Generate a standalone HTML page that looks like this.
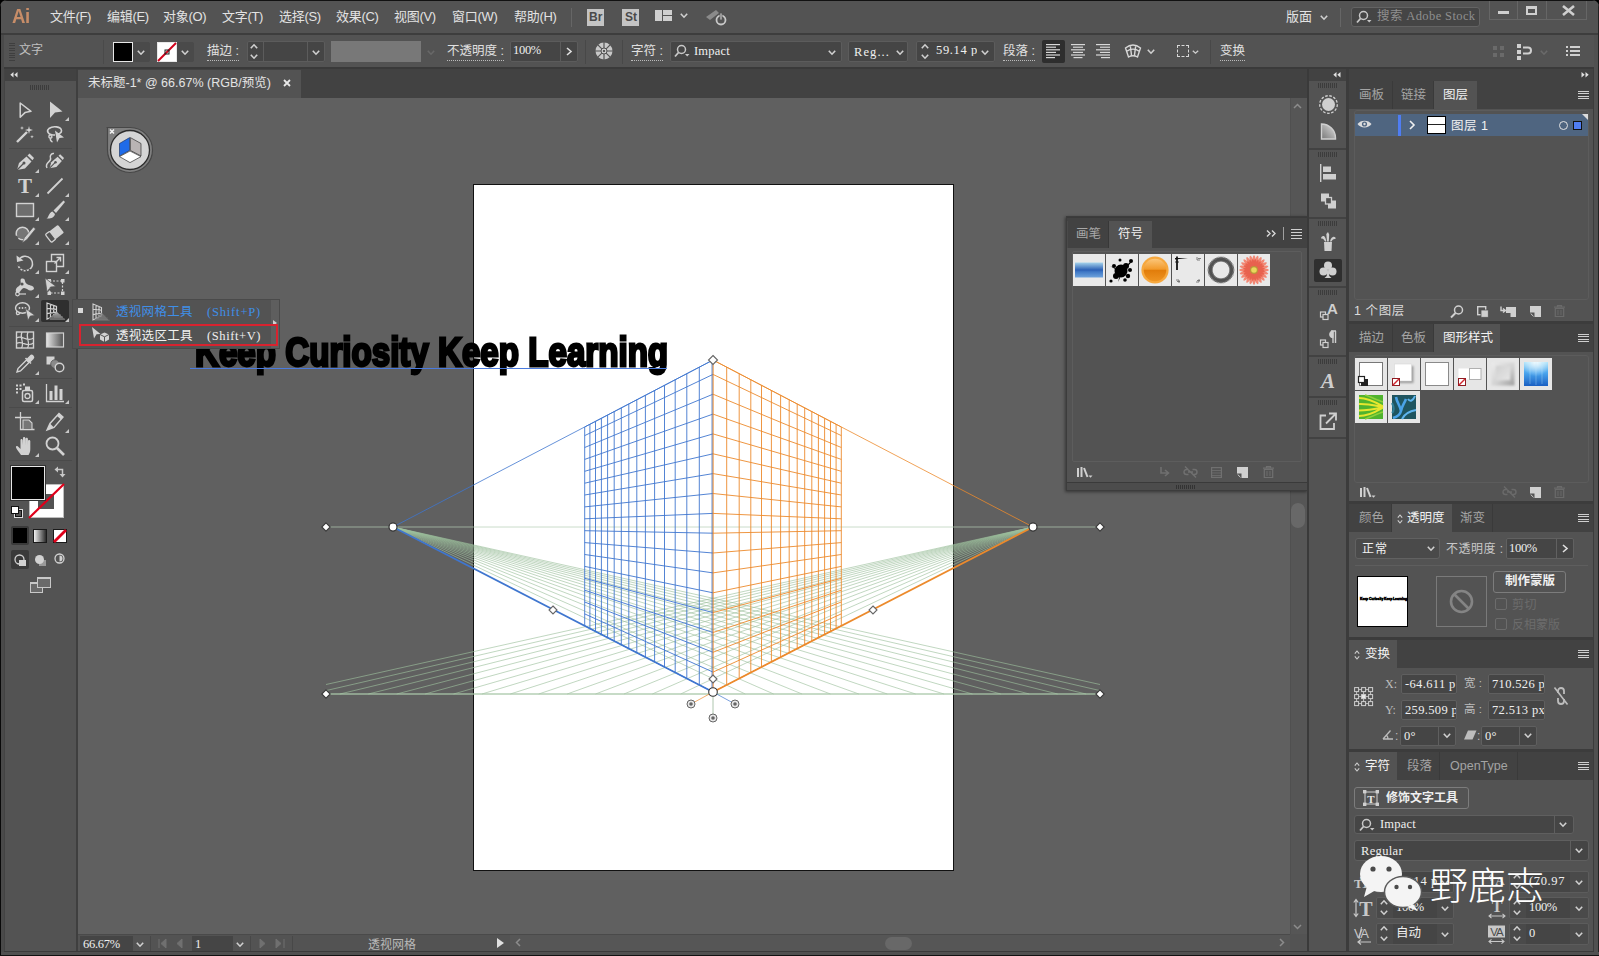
<!DOCTYPE html><html lang="zh"><head><meta charset="utf-8"><title>Illustrator</title><style>
*{box-sizing:border-box;margin:0;padding:0}
html,body{width:1599px;height:956px;overflow:hidden;background:#000}
body{font-family:"Liberation Sans","Noto Sans CJK SC",sans-serif;font-size:12px;color:#d6d6d6;position:relative}
.a{position:absolute}
.mono{font-family:"Liberation Mono","Noto Sans CJK SC",monospace}
.num{font-family:"Liberation Serif","Noto Sans CJK SC",serif}
#win{position:absolute;left:0;top:0;width:1599px;height:956px;background:#535353;border-radius:7px 7px 0 0;overflow:hidden}
.t{position:absolute;white-space:nowrap;line-height:1}
.fld{position:absolute;background:#454545;border:1px solid #5f5f5f;border-radius:2px}
.dk{background:#424242}
svg{position:absolute;overflow:visible}
</style></head><body><div id="win">
<div class="a" style="left:0px;top:0px;width:1599px;height:34px;background:#535353;"></div>
<div class="a" style="left:0px;top:33px;width:1599px;height:2px;background:#3d3d3d;"></div>
<div class="t " style="left:12px;top:6px;font-size:20px;color:#c78d68;font-weight:bold;letter-spacing:-0.5px;transform:scaleX(0.93);transform-origin:0 0">Ai</div>
<div class="t " style="left:50px;top:10px;font-size:13px;color:#e2e2e2;letter-spacing:-0.3px">文件(F)</div>
<div class="t " style="left:107px;top:10px;font-size:13px;color:#e2e2e2;letter-spacing:-0.3px">编辑(E)</div>
<div class="t " style="left:163px;top:10px;font-size:13px;color:#e2e2e2;letter-spacing:-0.3px">对象(O)</div>
<div class="t " style="left:222px;top:10px;font-size:13px;color:#e2e2e2;letter-spacing:-0.3px">文字(T)</div>
<div class="t " style="left:279px;top:10px;font-size:13px;color:#e2e2e2;letter-spacing:-0.3px">选择(S)</div>
<div class="t " style="left:336px;top:10px;font-size:13px;color:#e2e2e2;letter-spacing:-0.3px">效果(C)</div>
<div class="t " style="left:394px;top:10px;font-size:13px;color:#e2e2e2;letter-spacing:-0.3px">视图(V)</div>
<div class="t " style="left:452px;top:10px;font-size:13px;color:#e2e2e2;letter-spacing:-0.3px">窗口(W)</div>
<div class="t " style="left:514px;top:10px;font-size:13px;color:#e2e2e2;letter-spacing:-0.3px">帮助(H)</div>
<div class="a" style="left:571px;top:8px;width:1px;height:19px;background:#666;"></div>
<div class="a" style="left:587px;top:9px;width:17px;height:17px;background:#c4c4c4;"></div>
<div class="t " style="left:589px;top:11px;font-size:12px;color:#4a4a4a;font-weight:bold">Br</div>
<div class="a" style="left:622px;top:9px;width:17px;height:17px;background:#c4c4c4;"></div>
<div class="t " style="left:625px;top:11px;font-size:12px;color:#4a4a4a;font-weight:bold">St</div>
<div class="a" style="left:655px;top:10px;width:7px;height:11px;background:#cfcfcf;"></div>
<div class="a" style="left:663px;top:10px;width:9px;height:5px;background:#cfcfcf;"></div>
<div class="a" style="left:663px;top:16px;width:9px;height:5px;background:#cfcfcf;"></div>
<svg class="a" style="left:680px;top:13px" width="8" height="5" viewBox="0 0 8 5"><path d="M0.8 0.8 L4.0 4.2 L7.2 0.8" fill="none" stroke="#d0d0d0" stroke-width="1.6"/></svg>
<svg class="a" style="left:704px;top:8px;" width="24" height="20" viewBox="0 0 24 20"><path d="M2 9 L12 2 L15 5 L6 12 Z" fill="#8a8a8a"/><circle cx="17" cy="12" r="4.5" fill="none" stroke="#c8c8c8" stroke-width="1.8"/><rect x="16" y="5" width="2" height="7" fill="#c8c8c8" stroke="#535353" stroke-width="0.8"/></svg>
<div class="t " style="left:1286px;top:10px;font-size:13px;color:#e2e2e2;">版面</div>
<svg class="a" style="left:1320px;top:15px" width="8" height="5" viewBox="0 0 8 5"><path d="M0.8 0.8 L4.0 4.2 L7.2 0.8" fill="none" stroke="#d0d0d0" stroke-width="1.6"/></svg>
<div class="a" style="left:1340px;top:8px;width:1px;height:19px;background:#666;"></div>
<div class="a" style="left:1351px;top:7px;width:129px;height:20px;background:#454545;border:1px solid #636363;border-radius:3px"></div>
<svg class="a" style="left:1356px;top:10px;" width="18" height="14" viewBox="0 0 18 14"><circle cx="7.5" cy="5.5" r="4" fill="none" stroke="#c8c8c8" stroke-width="1.5"/><path d="M4.5 8.5 L1 12.5" stroke="#c8c8c8" stroke-width="1.8"/><path d="M11 10 L15.5 10 L13.2 12.5 Z" fill="#c8c8c8"/></svg>
<div class="t num" style="left:1377px;top:9.5px;font-size:12.5px;color:#8f8f8f;letter-spacing:0.39px;">搜索 Adobe Stock</div>
<div class="a" style="left:1489px;top:1px;width:98px;height:19px;border:1px solid #666;border-top:none"></div>
<div class="a" style="left:1517px;top:1px;width:1px;height:19px;background:#666;"></div>
<div class="a" style="left:1546px;top:1px;width:1px;height:19px;background:#666;"></div>
<div class="a" style="left:1498px;top:11px;width:11px;height:3px;background:#cfcfcf;"></div>
<div class="a" style="left:1526px;top:6px;width:11px;height:9px;border:2px solid #cfcfcf;border-top-width:3px"></div>
<svg class="a" style="left:1562px;top:5px;" width="13" height="11" viewBox="0 0 13 11"><path d="M1 1 L12 10 M12 1 L1 10" stroke="#cfcfcf" stroke-width="2.6"/></svg>
<div class="a" style="left:0px;top:35px;width:1599px;height:32px;background:#535353;"></div>
<div class="a" style="left:0px;top:67px;width:1599px;height:2px;background:#3a3a3a;"></div>
<div class="a" style="left:9px;top:43.0px;width:6px;height:1px;background:#3f3f3f;"></div>
<div class="a" style="left:9px;top:45.4px;width:6px;height:1px;background:#3f3f3f;"></div>
<div class="a" style="left:9px;top:47.8px;width:6px;height:1px;background:#3f3f3f;"></div>
<div class="a" style="left:9px;top:50.2px;width:6px;height:1px;background:#3f3f3f;"></div>
<div class="a" style="left:9px;top:52.6px;width:6px;height:1px;background:#3f3f3f;"></div>
<div class="a" style="left:9px;top:55.0px;width:6px;height:1px;background:#3f3f3f;"></div>
<div class="a" style="left:9px;top:57.4px;width:6px;height:1px;background:#3f3f3f;"></div>
<div class="a" style="left:9px;top:59.8px;width:6px;height:1px;background:#3f3f3f;"></div>
<div class="t " style="left:19px;top:44px;font-size:12px;color:#c0c0c0;">文字</div>
<div class="a" style="left:103px;top:40px;width:1px;height:24px;background:#4a4a4a;"></div>
<div class="a" style="left:113px;top:42px;width:20px;height:20px;background:#000;border:1px solid #e8e8e8"></div>
<div class="a" style="left:133px;top:42px;width:17px;height:20px;background:#4a4a4a;border-radius:0 2px 2px 0"></div>
<svg class="a" style="left:137px;top:50px" width="8" height="5" viewBox="0 0 8 5"><path d="M0.8 0.8 L4.0 4.2 L7.2 0.8" fill="none" stroke="#d0d0d0" stroke-width="1.6"/></svg>
<div class="a" style="left:157px;top:42px;width:20px;height:20px;background:#fff;border:1px solid #e8e8e8"></div>
<svg class="a" style="left:157px;top:42px;" width="20" height="20" viewBox="0 0 20 20"><path d="M1 19 L19 1" stroke="#d0021b" stroke-width="2"/><rect x="8" y="8" width="4" height="4" fill="none" stroke="#222" stroke-width="1"/></svg>
<div class="a" style="left:177px;top:42px;width:17px;height:20px;background:#4a4a4a;border-radius:0 2px 2px 0"></div>
<svg class="a" style="left:181px;top:50px" width="8" height="5" viewBox="0 0 8 5"><path d="M0.8 0.8 L4.0 4.2 L7.2 0.8" fill="none" stroke="#d0d0d0" stroke-width="1.6"/></svg>
<div class="t " style="left:207px;top:45px;font-size:12.5px;color:#e0e0e0;border-bottom:1px dotted #bbb;padding-bottom:2px">描边 :</div>
<div class="a" style="left:247px;top:41px;width:78px;height:21px;background:#454545;border:1px solid #5c5c5c;border-radius:2px"></div>
<div class="a" style="left:263px;top:42px;width:1px;height:19px;background:#5c5c5c;"></div>
<div class="a" style="left:307px;top:42px;width:1px;height:19px;background:#5c5c5c;"></div>
<svg class="a" style="left:250px;top:54px;" width="8" height="5" viewBox="0 0 8 5"><path d="M0.8 0.8 L4 4.2 L7.2 0.8" fill="none" stroke="#d0d0d0" stroke-width="1.6"/></svg>
<svg class="a" style="left:250px;top:44px;" width="8" height="5" viewBox="0 0 8 5"><path d="M0.8 4.2 L4 0.8 L7.2 4.2" fill="none" stroke="#d0d0d0" stroke-width="1.6"/></svg>
<svg class="a" style="left:312px;top:50px" width="8" height="5" viewBox="0 0 8 5"><path d="M0.8 0.8 L4.0 4.2 L7.2 0.8" fill="none" stroke="#d0d0d0" stroke-width="1.6"/></svg>
<div class="a" style="left:331px;top:41px;width:90px;height:21px;background:#787878;"></div>
<svg class="a" style="left:427px;top:50px" width="8" height="5" viewBox="0 0 8 5"><path d="M0.8 0.8 L4.0 4.2 L7.2 0.8" fill="none" stroke="#686868" stroke-width="1.6"/></svg>
<div class="t " style="left:447px;top:45px;font-size:12.5px;color:#e0e0e0;border-bottom:1px dotted #bbb;padding-bottom:2px">不透明度 :</div>
<div class="a" style="left:510px;top:41px;width:68px;height:21px;background:#454545;border:1px solid #5c5c5c;border-radius:2px"></div>
<div class="a" style="left:560px;top:42px;width:1px;height:19px;background:#5c5c5c;"></div>
<div class="t num" style="left:513px;top:43.5px;font-size:12.5px;color:#f0f0f0;letter-spacing:-0.30px;">100%</div>
<svg class="a" style="left:566px;top:47px;" width="6" height="9" viewBox="0 0 6 9"><path d="M1 1 L5 4.5 L1 8" fill="none" stroke="#e0e0e0" stroke-width="1.6"/></svg>
<div class="a" style="left:585px;top:40px;width:1px;height:24px;background:#484848;"></div>
<svg class="a" style="left:595px;top:42px;" width="18" height="18" viewBox="0 0 18 18"><circle cx="9" cy="9" r="8.5" fill="#c8c8c8"/><g stroke="#535353" stroke-width="1.2"><path d="M9 0 V18 M0 9 H18 M2.6 2.6 L15.4 15.4 M15.4 2.6 L2.6 15.4"/></g><circle cx="9" cy="9" r="3" fill="#c8c8c8" stroke="#535353"/><circle cx="9" cy="9" r="1" fill="#333"/></svg>
<div class="a" style="left:622px;top:40px;width:1px;height:24px;background:#484848;"></div>
<div class="t " style="left:631px;top:45px;font-size:12.5px;color:#e0e0e0;border-bottom:1px dotted #bbb;padding-bottom:2px">字符 :</div>
<div class="a" style="left:670px;top:41px;width:172px;height:21px;background:#454545;border:1px solid #5c5c5c;border-radius:2px"></div>
<svg class="a" style="left:674px;top:44px;" width="16" height="14" viewBox="0 0 16 14"><circle cx="7.5" cy="5.5" r="4" fill="none" stroke="#c8c8c8" stroke-width="1.5"/><path d="M4.5 8.5 L1 12.5" stroke="#c8c8c8" stroke-width="1.8"/><path d="M11 10 L15.5 10 L13.2 12.5 Z" fill="#c8c8c8"/></svg>
<div class="t num" style="left:694px;top:44.5px;font-size:12.5px;color:#f0f0f0;letter-spacing:0.21px;">Impact</div>
<svg class="a" style="left:828px;top:50px" width="8" height="5" viewBox="0 0 8 5"><path d="M0.8 0.8 L4.0 4.2 L7.2 0.8" fill="none" stroke="#d0d0d0" stroke-width="1.6"/></svg>
<div class="a" style="left:848px;top:41px;width:60px;height:21px;background:#454545;border:1px solid #5c5c5c;border-radius:2px"></div>
<div class="t num" style="left:854px;top:45.5px;font-size:12.5px;color:#f0f0f0;letter-spacing:1.08px;">Reg...</div>
<svg class="a" style="left:896px;top:50px" width="8" height="5" viewBox="0 0 8 5"><path d="M0.8 0.8 L4.0 4.2 L7.2 0.8" fill="none" stroke="#d0d0d0" stroke-width="1.6"/></svg>
<div class="a" style="left:916px;top:41px;width:79px;height:21px;background:#454545;border:1px solid #5c5c5c;border-radius:2px"></div>
<svg class="a" style="left:921px;top:44px;" width="8" height="5" viewBox="0 0 8 5"><path d="M0.8 4.2 L4 0.8 L7.2 4.2" fill="none" stroke="#d0d0d0" stroke-width="1.6"/></svg>
<svg class="a" style="left:921px;top:54px;" width="8" height="5" viewBox="0 0 8 5"><path d="M0.8 0.8 L4 4.2 L7.2 0.8" fill="none" stroke="#d0d0d0" stroke-width="1.6"/></svg>
<div class="t num" style="left:936px;top:43.5px;font-size:12.5px;color:#f0f0f0;letter-spacing:0.64px;width:41px;overflow:hidden">59.14 p</div>
<svg class="a" style="left:981px;top:50px" width="8" height="5" viewBox="0 0 8 5"><path d="M0.8 0.8 L4.0 4.2 L7.2 0.8" fill="none" stroke="#d0d0d0" stroke-width="1.6"/></svg>
<div class="t " style="left:1003px;top:45px;font-size:12.5px;color:#e0e0e0;border-bottom:1px dotted #bbb;padding-bottom:2px">段落 :</div>
<div class="a" style="left:1042px;top:40px;width:23px;height:23px;background:#2e2e2e;border-radius:2px"></div>
<svg class="a" style="left:1046px;top:44px;" width="14" height="15" viewBox="0 0 14 15"><rect x="0" y="0.0" width="14" height="1.2" fill="#d8d8d8"/><rect x="0" y="2.6" width="10" height="1.2" fill="#d8d8d8"/><rect x="0" y="5.2" width="14" height="1.2" fill="#d8d8d8"/><rect x="0" y="7.800000000000001" width="10" height="1.2" fill="#d8d8d8"/><rect x="0" y="10.4" width="14" height="1.2" fill="#d8d8d8"/><rect x="0" y="13.0" width="9" height="1.2" fill="#d8d8d8"/></svg>
<svg class="a" style="left:1071px;top:44px;" width="14" height="15" viewBox="0 0 14 15"><rect x="0.0" y="0.0" width="14" height="1.2" fill="#d8d8d8"/><rect x="2.0" y="2.6" width="10" height="1.2" fill="#d8d8d8"/><rect x="0.0" y="5.2" width="14" height="1.2" fill="#d8d8d8"/><rect x="2.0" y="7.800000000000001" width="10" height="1.2" fill="#d8d8d8"/><rect x="0.0" y="10.4" width="14" height="1.2" fill="#d8d8d8"/><rect x="2.5" y="13.0" width="9" height="1.2" fill="#d8d8d8"/></svg>
<svg class="a" style="left:1096px;top:44px;" width="14" height="15" viewBox="0 0 14 15"><rect x="0" y="0.0" width="14" height="1.2" fill="#d8d8d8"/><rect x="4" y="2.6" width="10" height="1.2" fill="#d8d8d8"/><rect x="0" y="5.2" width="14" height="1.2" fill="#d8d8d8"/><rect x="4" y="7.800000000000001" width="10" height="1.2" fill="#d8d8d8"/><rect x="0" y="10.4" width="14" height="1.2" fill="#d8d8d8"/><rect x="5" y="13.0" width="9" height="1.2" fill="#d8d8d8"/></svg>
<svg class="a" style="left:1124px;top:43px;" width="18" height="16" viewBox="0 0 18 16"><path d="M1.5 5 Q9 -1 16.5 5 L13.5 14 Q9 11.5 4.5 14 Z M6.2 2.2 L7.5 12.2 M11.8 2.2 L10.5 12.2 M2.6 8.3 Q9 4 15.4 8.3" fill="none" stroke="#d8d8d8" stroke-width="1.4"/></svg>
<svg class="a" style="left:1147px;top:49px" width="8" height="5" viewBox="0 0 8 5"><path d="M0.8 0.8 L4.0 4.2 L7.2 0.8" fill="none" stroke="#d0d0d0" stroke-width="1.6"/></svg>
<div class="a" style="left:1177px;top:45px;width:12px;height:12px;border:1.5px dashed #d8d8d8"></div>
<svg class="a" style="left:1192px;top:50px" width="7" height="4" viewBox="0 0 7 4"><path d="M0.8 0.8 L3.5 3.2 L6.2 0.8" fill="none" stroke="#d0d0d0" stroke-width="1.3"/></svg>
<div class="a" style="left:1210px;top:40px;width:1px;height:24px;background:#484848;"></div>
<div class="t " style="left:1220px;top:45px;font-size:12.5px;color:#e0e0e0;border-bottom:1px dotted #bbb;padding-bottom:2px">变换</div>
<div class="a" style="left:1493px;top:46px;width:4px;height:4px;background:#6a6a6a;"></div>
<div class="a" style="left:1500px;top:46px;width:4px;height:4px;background:#6a6a6a;"></div>
<div class="a" style="left:1493px;top:53px;width:4px;height:4px;background:#6a6a6a;"></div>
<div class="a" style="left:1500px;top:53px;width:4px;height:4px;background:#6a6a6a;"></div>
<div class="a" style="left:1517px;top:44px;width:4px;height:4px;background:#d0d0d0;"></div>
<div class="a" style="left:1517px;top:50px;width:4px;height:4px;background:#d0d0d0;"></div>
<div class="a" style="left:1517px;top:56px;width:4px;height:4px;background:#d0d0d0;"></div>
<svg class="a" style="left:1523px;top:46px;" width="10" height="9" viewBox="0 0 10 9"><path d="M0 1.5 H5 A3 3 0 0 1 5 7.5 H0" fill="none" stroke="#d0d0d0" stroke-width="2"/></svg>
<svg class="a" style="left:1540px;top:50px" width="8" height="5" viewBox="0 0 8 5"><path d="M0.8 0.8 L4.0 4.2 L7.2 0.8" fill="none" stroke="#6a6a6a" stroke-width="1.6"/></svg>
<div class="a" style="left:1566px;top:46px;width:2px;height:2px;background:#d0d0d0;"></div>
<div class="a" style="left:1570px;top:46px;width:10px;height:1.5px;background:#d0d0d0;"></div>
<div class="a" style="left:1566px;top:50px;width:2px;height:2px;background:#d0d0d0;"></div>
<div class="a" style="left:1570px;top:50px;width:10px;height:1.5px;background:#d0d0d0;"></div>
<div class="a" style="left:1566px;top:54px;width:2px;height:2px;background:#d0d0d0;"></div>
<div class="a" style="left:1570px;top:54px;width:10px;height:1.5px;background:#d0d0d0;"></div>
<div class="a" style="left:0px;top:69px;width:78px;height:887px;background:#535353;"></div>
<div class="a" style="left:5px;top:69px;width:71px;height:12px;background:#424242;"></div>
<svg class="a" style="left:10px;top:72px;" width="8" height="6" viewBox="0 0 8 6"><path d="M3.5 0 V5.6 L0.3 2.8 Z M7.5 0 V5.6 L4.3 2.8 Z" fill="#e0e0e0"/></svg>
<div class="a" style="left:30px;top:85px;width:1px;height:5px;background:#3c3c3c;"></div>
<div class="a" style="left:32px;top:85px;width:1px;height:5px;background:#3c3c3c;"></div>
<div class="a" style="left:34px;top:85px;width:1px;height:5px;background:#3c3c3c;"></div>
<div class="a" style="left:36px;top:85px;width:1px;height:5px;background:#3c3c3c;"></div>
<div class="a" style="left:38px;top:85px;width:1px;height:5px;background:#3c3c3c;"></div>
<div class="a" style="left:40px;top:85px;width:1px;height:5px;background:#3c3c3c;"></div>
<div class="a" style="left:42px;top:85px;width:1px;height:5px;background:#3c3c3c;"></div>
<div class="a" style="left:44px;top:85px;width:1px;height:5px;background:#3c3c3c;"></div>
<div class="a" style="left:46px;top:85px;width:1px;height:5px;background:#3c3c3c;"></div>
<div class="a" style="left:48px;top:85px;width:1px;height:5px;background:#3c3c3c;"></div>
<div class="a" style="left:76px;top:69px;width:2px;height:887px;background:#3f3f3f;"></div>
<div class="a" style="left:4px;top:69px;width:1px;height:887px;background:#444;"></div>
<svg class="a" style="left:14px;top:99.5px" width="22" height="22" viewBox="0 0 22 22"><path d="M6.2 3 L17 11.3 L11 12.6 L6.2 17.3 Z" fill="none" stroke="#d2d2d2" stroke-width="1.5" stroke-linejoin="round"/></svg>
<svg class="a" style="left:44px;top:99.5px" width="22" height="22" viewBox="0 0 22 22"><path d="M6 1.5 L18.5 11.5 L11 12.5 L6 18 Z" fill="#d2d2d2"/></svg>
<svg class="a" style="left:65px;top:117.0px" width="4" height="4" viewBox="0 0 4 4"><path d="M4 0 V4 H0 Z" fill="#c8c8c8"/></svg>
<svg class="a" style="left:14px;top:123px" width="22" height="22" viewBox="0 0 22 22"><path d="M3 19 L13 9" stroke="#d2d2d2" stroke-width="2.4"/><path d="M15 3 L15.8 6 L19 7 L15.8 8 L15 11 L14.2 8 L11 7 L14.2 6 Z" fill="#d2d2d2"/><path d="M8 3 L8.5 4.5 L10 5 L8.5 5.5 L8 7 L7.5 5.5 L6 5 L7.5 4.5 Z" fill="#d2d2d2"/><path d="M18 12 l.5 1.3 l1.3 .5 l-1.3 .5 l-.5 1.3 l-.5 -1.3 l-1.3 -.5 l1.3 -.5 Z" fill="#d2d2d2"/></svg>
<svg class="a" style="left:44px;top:123px" width="22" height="22" viewBox="0 0 22 22"><path d="M11 12 C4 12 2 8 5 5.5 C9 2.5 17 3.5 17.5 7.5 C17.8 10 15 11 13.5 11" fill="none" stroke="#d2d2d2" stroke-width="1.6"/><path d="M6.5 11.5 C4 12.5 4.5 15.5 7 15 C8.5 14.5 8 12.5 6.5 12.5 M6.5 15 C6 17 7 18.5 8.5 19" fill="none" stroke="#d2d2d2" stroke-width="1.4"/><path d="M11 7.5 L20 14.5 L15.5 15 L13 19.5 Z" fill="#d2d2d2"/></svg>
<svg class="a" style="left:14px;top:151px" width="22" height="22" viewBox="0 0 22 22"><path d="M3 19 L5 12 L12.5 5.5 L17.5 10.5 L11 17.5 Z" fill="#d2d2d2"/><path d="M13.5 4.5 L15.5 2.5 L20 7 L18.5 9.3 Z" fill="#d2d2d2"/><path d="M3 19 L9.5 12.5" stroke="#535353" stroke-width="1.2"/><circle cx="10" cy="12" r="1.5" fill="#535353"/></svg>
<svg class="a" style="left:35px;top:168.5px" width="4" height="4" viewBox="0 0 4 4"><path d="M4 0 V4 H0 Z" fill="#c8c8c8"/></svg>
<svg class="a" style="left:44px;top:151px" width="22" height="22" viewBox="0 0 22 22"><g transform="translate(3,1) scale(0.85)"><path d="M3 19 L5 12 L12.5 5.5 L17.5 10.5 L11 17.5 Z" fill="#d2d2d2"/><path d="M13.5 4.5 L15.5 2.5 L20 7 L18.5 9.3 Z" fill="#d2d2d2"/><path d="M3 19 L9.5 12.5" stroke="#535353" stroke-width="1.2"/><circle cx="10" cy="12" r="1.5" fill="#535353"/></g><path d="M3 17 C0 11 8 11 6.5 7 C5.5 4 8 2 10 2.5" fill="none" stroke="#d2d2d2" stroke-width="1.5"/></svg>
<svg class="a" style="left:14px;top:175px" width="22" height="22" viewBox="0 0 22 22"><text x="11" y="18" font-family="Liberation Serif,serif" font-size="21" font-weight="bold" text-anchor="middle" fill="#d2d2d2">T</text></svg>
<svg class="a" style="left:35px;top:192.5px" width="4" height="4" viewBox="0 0 4 4"><path d="M4 0 V4 H0 Z" fill="#c8c8c8"/></svg>
<svg class="a" style="left:44px;top:175px" width="22" height="22" viewBox="0 0 22 22"><path d="M3.5 18.5 L18.5 3.5" stroke="#d2d2d2" stroke-width="1.8"/></svg>
<svg class="a" style="left:65px;top:192.5px" width="4" height="4" viewBox="0 0 4 4"><path d="M4 0 V4 H0 Z" fill="#c8c8c8"/></svg>
<svg class="a" style="left:14px;top:199px" width="22" height="22" viewBox="0 0 22 22"><rect x="2.5" y="4.5" width="17" height="13" fill="#6e6e6e" stroke="#d2d2d2" stroke-width="1.4"/></svg>
<svg class="a" style="left:35px;top:216.5px" width="4" height="4" viewBox="0 0 4 4"><path d="M4 0 V4 H0 Z" fill="#c8c8c8"/></svg>
<svg class="a" style="left:44px;top:199px" width="22" height="22" viewBox="0 0 22 22"><path d="M19.5 1.5 L21 3 L12 14 L9.5 11.5 Z" fill="#d2d2d2"/><path d="M8.5 12.5 L11 15 C10.5 18.5 6.5 20 2.5 19.5 C5 18.5 4.5 13.5 8.5 12.5 Z" fill="#d2d2d2"/></svg>
<svg class="a" style="left:65px;top:216.5px" width="4" height="4" viewBox="0 0 4 4"><path d="M4 0 V4 H0 Z" fill="#c8c8c8"/></svg>
<svg class="a" style="left:14px;top:223px" width="22" height="22" viewBox="0 0 22 22"><circle cx="8.5" cy="10.5" r="6.3" fill="#767676" stroke="#d2d2d2" stroke-width="1.5" stroke-dasharray="14 3 30"/><path d="M8 20 L10.5 14.5 L19.5 4 L21.5 6 L13 16.5 Z" fill="#d2d2d2" stroke="#535353" stroke-width="0.6"/></svg>
<svg class="a" style="left:35px;top:240.5px" width="4" height="4" viewBox="0 0 4 4"><path d="M4 0 V4 H0 Z" fill="#c8c8c8"/></svg>
<svg class="a" style="left:44px;top:223px" width="22" height="22" viewBox="0 0 22 22"><g transform="rotate(-38 11 11)"><rect x="3" y="5.5" width="16" height="10" rx="1.2" fill="#d2d2d2"/><rect x="3" y="5.5" width="5.5" height="10" rx="1.2" fill="#535353" stroke="#d2d2d2" stroke-width="1.3"/></g></svg>
<svg class="a" style="left:65px;top:240.5px" width="4" height="4" viewBox="0 0 4 4"><path d="M4 0 V4 H0 Z" fill="#c8c8c8"/></svg>
<svg class="a" style="left:14px;top:252px" width="22" height="22" viewBox="0 0 22 22"><path d="M5 7.5 A7.3 7.3 0 1 1 4 13" fill="none" stroke="#d2d2d2" stroke-width="1.5" stroke-dasharray="17 0"/><path d="M4 13 A7.3 7.3 0 0 0 17.5 15.5" fill="none" stroke="#535353" stroke-width="2" stroke-dasharray="1.5 2"/><path d="M2.5 3.5 L3 10 L9.5 8.5 Z" fill="#d2d2d2"/></svg>
<svg class="a" style="left:35px;top:269.5px" width="4" height="4" viewBox="0 0 4 4"><path d="M4 0 V4 H0 Z" fill="#c8c8c8"/></svg>
<svg class="a" style="left:44px;top:252px" width="22" height="22" viewBox="0 0 22 22"><rect x="2.5" y="9.5" width="10" height="10" fill="none" stroke="#d2d2d2" stroke-width="1.4"/><path d="M7.5 9 V2.5 H19.5 V14.5 H13" fill="none" stroke="#d2d2d2" stroke-width="1.4"/><path d="M10.5 11.5 L16 6 M12.5 5.5 H16.5 V9.5" fill="none" stroke="#d2d2d2" stroke-width="1.4"/></svg>
<svg class="a" style="left:65px;top:269.5px" width="4" height="4" viewBox="0 0 4 4"><path d="M4 0 V4 H0 Z" fill="#c8c8c8"/></svg>
<svg class="a" style="left:14px;top:276px" width="22" height="22" viewBox="0 0 22 22"><path d="M2 16 C6 19 7 12 10 12 C14 12 15 17 20 13 C20 9 16 10 13 8 C10 6 12 2 8 2.5 C5 3 8 7 6 9 C4 11 1 12 2 16 Z" fill="#d2d2d2"/><circle cx="8" cy="8" r="1.6" fill="#535353"/><circle cx="3.5" cy="18" r="1.8" fill="none" stroke="#d2d2d2" stroke-width="1.2"/><path d="M5 18 H12" stroke="#d2d2d2" stroke-width="1.2"/></svg>
<svg class="a" style="left:35px;top:293.5px" width="4" height="4" viewBox="0 0 4 4"><path d="M4 0 V4 H0 Z" fill="#c8c8c8"/></svg>
<svg class="a" style="left:44px;top:276px" width="22" height="22" viewBox="0 0 22 22"><rect x="5.5" y="5" width="13" height="12" fill="none" stroke="#d2d2d2" stroke-width="1.2" stroke-dasharray="2 1.5"/><rect x="3.5" y="3" width="3.5" height="3.5" fill="#d2d2d2"/><rect x="17" y="3" width="3.5" height="3.5" fill="#d2d2d2"/><rect x="3.5" y="15.5" width="3.5" height="3.5" fill="#d2d2d2"/><rect x="17" y="15.5" width="3.5" height="3.5" fill="#d2d2d2"/><path d="M1 2 L12 10.5 L6.5 11 L3 16 Z" fill="#d2d2d2" stroke="#535353" stroke-width="0.7"/></svg>
<svg class="a" style="left:14px;top:300px" width="22" height="22" viewBox="0 0 22 22"><ellipse cx="8.5" cy="8" rx="7" ry="5.2" fill="none" stroke="#d2d2d2" stroke-width="1.4"/><path d="M3 11 C1.5 14 3 16 6 13.2" fill="none" stroke="#d2d2d2" stroke-width="1.4"/><circle cx="5.5" cy="8" r=".9" fill="#d2d2d2"/><circle cx="8.5" cy="8" r=".9" fill="#d2d2d2"/><circle cx="11.5" cy="8" r=".9" fill="#d2d2d2"/><path d="M11.5 8.5 L21 15.5 L16.3 16 L14 20.5 Z" fill="#d2d2d2" stroke="#535353" stroke-width="0.7"/></svg>
<svg class="a" style="left:35px;top:317.5px" width="4" height="4" viewBox="0 0 4 4"><path d="M4 0 V4 H0 Z" fill="#c8c8c8"/></svg>
<div class="a" style="left:41px;top:300px;width:28px;height:22px;background:#2f2f2f;border-radius:2px"></div>
<svg class="a" style="left:44px;top:300px" width="22" height="22" viewBox="0 0 22 22"><defs><linearGradient id="pgg" x1="0" y1="0" x2="0" y2="1"><stop offset="0" stop-color="#bbb"/><stop offset="1" stop-color="#555"/></linearGradient></defs><path d="M3 3 L12.5 6.5 V15 L3 19 Z M6.5 4.3 V17.5 M9.7 5.5 V16.2 M3 8.3 L12.5 9.3 M3 13.6 L12.5 12.2" fill="none" stroke="#d2d2d2" stroke-width="1.2"/><path d="M12.5 11.5 L21 19.5 H4 Z" fill="url(#pgg)"/><path d="M12.5 15 H17 M10 17 H19 M6 19.2 H21" stroke="#888" stroke-width="0.9"/></svg>
<svg class="a" style="left:65px;top:317.5px" width="4" height="4" viewBox="0 0 4 4"><path d="M4 0 V4 H0 Z" fill="#c8c8c8"/></svg>
<svg class="a" style="left:14px;top:329px" width="22" height="22" viewBox="0 0 22 22"><rect x="2.5" y="3" width="17" height="16" fill="none" stroke="#d2d2d2" stroke-width="1.4"/><path d="M2.5 9 C8 5 13 14 19.5 9 M2.5 14.5 C8 11 13 19 19.5 14 M8 3 C5 9 11 13 7.5 19 M14 3 C11 9 17 13 13.5 19" fill="none" stroke="#d2d2d2" stroke-width="1.2"/></svg>
<svg class="a" style="left:44px;top:329px" width="22" height="22" viewBox="0 0 22 22"><defs><linearGradient id="gg1"><stop offset="0" stop-color="#e6e6e6"/><stop offset="1" stop-color="#4e4e4e"/></linearGradient></defs><rect x="2.5" y="4" width="17" height="14" fill="url(#gg1)" stroke="#d2d2d2" stroke-width="1.2"/></svg>
<svg class="a" style="left:14px;top:353px" width="22" height="22" viewBox="0 0 22 22"><path d="M3 19 L4 15.5 L12.5 7 L15 9.5 L6.5 18 Z" fill="none" stroke="#d2d2d2" stroke-width="1.4"/><path d="M11.5 5 L17 10.5 M13 6.5 L16.5 3 C18 1.5 20.5 4 19 5.5 L15.5 9" fill="#d2d2d2" stroke="#d2d2d2" stroke-width="1.6"/></svg>
<svg class="a" style="left:35px;top:370.5px" width="4" height="4" viewBox="0 0 4 4"><path d="M4 0 V4 H0 Z" fill="#c8c8c8"/></svg>
<svg class="a" style="left:44px;top:353px" width="22" height="22" viewBox="0 0 22 22"><rect x="2.5" y="3.5" width="8" height="8" fill="#d2d2d2"/><circle cx="11" cy="11" r="4.3" fill="#8a8a8a" stroke="#535353" stroke-width="0.8"/><circle cx="15.5" cy="14.5" r="4.3" fill="#535353" stroke="#d2d2d2" stroke-width="1.4"/></svg>
<svg class="a" style="left:14px;top:382px" width="22" height="22" viewBox="0 0 22 22"><rect x="8.5" y="8.5" width="10" height="11" rx="1.5" fill="none" stroke="#d2d2d2" stroke-width="1.5"/><circle cx="13.5" cy="14" r="2.5" fill="none" stroke="#d2d2d2" stroke-width="1.3"/><rect x="11" y="4.5" width="5" height="3.5" fill="#d2d2d2"/><g fill="#d2d2d2"><rect x="2" y="2.5" width="2" height="2"/><rect x="5.5" y="2.5" width="2" height="2"/><rect x="2" y="6" width="2" height="2"/><rect x="5.5" y="6" width="2" height="2"/><rect x="2" y="9.5" width="2" height="2"/><rect x="9" y="1.5" width="2" height="2"/></g></svg>
<svg class="a" style="left:35px;top:399.5px" width="4" height="4" viewBox="0 0 4 4"><path d="M4 0 V4 H0 Z" fill="#c8c8c8"/></svg>
<svg class="a" style="left:44px;top:382px" width="22" height="22" viewBox="0 0 22 22"><path d="M2.5 2 V19.5 H20" fill="none" stroke="#d2d2d2" stroke-width="1.3"/><rect x="5.5" y="9" width="3" height="9" fill="#d2d2d2"/><rect x="10.5" y="3.5" width="3" height="14.5" fill="#d2d2d2"/><rect x="15.5" y="7" width="3" height="11" fill="#d2d2d2"/></svg>
<svg class="a" style="left:65px;top:399.5px" width="4" height="4" viewBox="0 0 4 4"><path d="M4 0 V4 H0 Z" fill="#c8c8c8"/></svg>
<svg class="a" style="left:14px;top:411px" width="22" height="22" viewBox="0 0 22 22"><path d="M6.5 1 V18.5 H20.5 M1 6.5 H17" fill="none" stroke="#d2d2d2" stroke-width="1.3"/><path d="M9 9 H15 L18 12 V18.5 H9 Z" fill="#767676" stroke="#d2d2d2" stroke-width="1.1"/></svg>
<svg class="a" style="left:44px;top:411px" width="22" height="22" viewBox="0 0 22 22"><path d="M3 19 L6 12.5 L15 2.5 L19 6 L10 16.5 Z" fill="none" stroke="#d2d2d2" stroke-width="1.4"/><path d="M6 12.5 L10 16.5 L3 19 Z M15 2.5 L13 5 L17 8.5 L19 6 Z" fill="#d2d2d2"/></svg>
<svg class="a" style="left:65px;top:428.5px" width="4" height="4" viewBox="0 0 4 4"><path d="M4 0 V4 H0 Z" fill="#c8c8c8"/></svg>
<svg class="a" style="left:14px;top:435px" width="22" height="22" viewBox="0 0 22 22"><path d="M7 20 C5 17 2.5 14 2 12.5 C1.5 11 3.5 10.5 4.5 12 L6.5 14 V5 C6.5 3.5 8.5 3.5 8.7 5 L9 10 V3 C9 1.5 11.2 1.5 11.3 3 L11.5 10 V3.8 C11.6 2.3 13.8 2.3 13.9 3.8 L14 10.5 V6 C14 4.5 16.2 4.5 16.3 6 V14 C16.3 17 15.5 18.5 14.5 20 Z" fill="#d2d2d2"/></svg>
<svg class="a" style="left:35px;top:452.5px" width="4" height="4" viewBox="0 0 4 4"><path d="M4 0 V4 H0 Z" fill="#c8c8c8"/></svg>
<svg class="a" style="left:44px;top:435px" width="22" height="22" viewBox="0 0 22 22"><circle cx="8.5" cy="8.5" r="6" fill="none" stroke="#d2d2d2" stroke-width="1.8"/><path d="M13 13 L20 20" stroke="#d2d2d2" stroke-width="2.6"/></svg>
<div class="a" style="left:9px;top:148px;width:63px;height:1px;background:#4a4a4a;"></div>
<div class="a" style="left:9px;top:249px;width:63px;height:1px;background:#4a4a4a;"></div>
<div class="a" style="left:9px;top:326px;width:63px;height:1px;background:#4a4a4a;"></div>
<div class="a" style="left:9px;top:378px;width:63px;height:1px;background:#4a4a4a;"></div>
<div class="a" style="left:9px;top:407px;width:63px;height:1px;background:#4a4a4a;"></div>
<div class="a" style="left:9px;top:460px;width:63px;height:1px;background:#4a4a4a;"></div>
<div class="a" style="left:29px;top:484px;width:35px;height:34px;background:#fff;border:1px solid #bdbdbd"></div>
<div class="a" style="left:38px;top:494px;width:16px;height:15px;background:#535353;"></div>
<svg class="a" style="left:29px;top:484px;" width="35" height="34" viewBox="0 0 35 34"><path d="M0 34 L35 0" stroke="#e0001a" stroke-width="2.2"/></svg>
<div class="a" style="left:11px;top:466px;width:34px;height:34px;background:#000;border:1px solid #e6e6e6;outline:1px solid #333"></div>
<svg class="a" style="left:54px;top:466px;" width="12" height="12" viewBox="0 0 12 12"><path d="M3.5 3.5 H8.5 V8.5" fill="none" stroke="#c8c8c8" stroke-width="1.5"/><path d="M0.5 3.5 L4 0.5 V6.5 Z M8.5 11.5 L5.5 8 H11.5 Z" fill="#c8c8c8"/></svg>
<div class="a" style="left:15px;top:510px;width:7px;height:7px;background:#535353;border:1.5px solid #111;outline:1px solid #ddd"></div>
<div class="a" style="left:11px;top:506px;width:8px;height:8px;background:#fff;border:1px solid #111"></div>
<div class="a" style="left:11px;top:526px;width:18px;height:19px;background:#3a3a3a;border-radius:2px"></div>
<div class="a" style="left:13px;top:528px;width:14px;height:15px;background:#000;"></div>
<div class="a" style="left:33px;top:529px;width:14px;height:14px;background:linear-gradient(90deg,#f2f2f2,#2a2a2a);border:1px solid #1a1a1a"></div>
<div class="a" style="left:53px;top:529px;width:14px;height:14px;background:#fff;border:1px solid #1a1a1a"></div>
<svg class="a" style="left:53px;top:529px;" width="14" height="14" viewBox="0 0 14 14"><path d="M1 13 L13 1" stroke="#e0001a" stroke-width="2.8"/></svg>
<div class="a" style="left:11px;top:550px;width:18px;height:19px;background:#3a3a3a;border-radius:2px"></div>
<svg class="a" style="left:14px;top:554px;" width="13" height="13" viewBox="0 0 13 13"><circle cx="5.5" cy="5.5" r="4.5" fill="none" stroke="#d2d2d2" stroke-width="1.3"/><rect x="5" y="6" width="7" height="6" fill="#d2d2d2"/></svg>
<svg class="a" style="left:34px;top:554px;" width="13" height="13" viewBox="0 0 13 13"><rect x="5" y="6" width="7" height="6" fill="#999"/><circle cx="5.5" cy="5.5" r="4.5" fill="#d2d2d2" /></svg>
<svg class="a" style="left:54px;top:553px;" width="13" height="13" viewBox="0 0 13 13"><circle cx="5.5" cy="5.5" r="4.5" fill="none" stroke="#d2d2d2" stroke-width="1.3"/><path d="M5.5 2.5 A3 3 0 0 1 5.5 8.5 Z" fill="#d2d2d2"/></svg>
<div class="a" style="left:30px;top:582px;width:13px;height:11px;background:#6a6a6a;border:1px solid #c8c8c8;border-top-width:2px"></div>
<div class="a" style="left:37px;top:577px;width:14px;height:11px;background:#6a6a6a;border:1px solid #c8c8c8;border-top-width:2px"></div>
<div class="a" style="left:78px;top:69px;width:1230px;height:29px;background:#424242;"></div>
<div class="a" style="left:78px;top:70px;width:223px;height:28px;background:#535353;"></div>
<div class="t " style="left:88px;top:77px;font-size:12.5px;color:#e4e4e4;">未标题-1* @ 66.67% (RGB/预览)</div>
<svg class="a" style="left:283px;top:79px;" width="8" height="8" viewBox="0 0 8 8"><path d="M1 1 L7 7 M7 1 L1 7" stroke="#e8e8e8" stroke-width="1.8"/></svg>
<div class="a" style="left:78px;top:98px;width:1212px;height:836px;background:#606060;"></div>
<div class="a" style="left:1290px;top:98px;width:17px;height:836px;background:#565656;"></div>
<div class="a" style="left:1290px;top:98px;width:1px;height:836px;background:#505050;"></div>
<svg class="a" style="left:1293px;top:103px;" width="9" height="6" viewBox="0 0 9 6"><path d="M1 5 L4.5 1.5 L8 5" fill="none" stroke="#8c8c8c" stroke-width="1.5"/></svg>
<svg class="a" style="left:1293px;top:924px;" width="9" height="6" viewBox="0 0 9 6"><path d="M1 1 L4.5 4.5 L8 1" fill="none" stroke="#8c8c8c" stroke-width="1.5"/></svg>
<div class="a" style="left:1291px;top:503px;width:14px;height:25px;background:#686868;border-radius:7px"></div>
<div class="a" style="left:473px;top:184px;width:481px;height:687px;background:#fff;border:1px solid #111"></div>
<svg class="a" style="left:0;top:0" width="1599" height="956" viewBox="0 0 1599 956"><line x1="393.0" y1="527.0" x2="745.3" y2="694.0" stroke="#9dc09d" stroke-width="0.8" opacity="0.8"/><line x1="393.0" y1="527.0" x2="773.7" y2="694.0" stroke="#9dc09d" stroke-width="0.8" opacity="0.8"/><line x1="393.0" y1="527.0" x2="802.1" y2="694.0" stroke="#9dc09d" stroke-width="0.8" opacity="0.8"/><line x1="393.0" y1="527.0" x2="830.5" y2="694.0" stroke="#9dc09d" stroke-width="0.8" opacity="0.8"/><line x1="393.0" y1="527.0" x2="858.9" y2="694.0" stroke="#9dc09d" stroke-width="0.8" opacity="0.8"/><line x1="393.0" y1="527.0" x2="887.3" y2="694.0" stroke="#9dc09d" stroke-width="0.8" opacity="0.8"/><line x1="393.0" y1="527.0" x2="915.7" y2="694.0" stroke="#9dc09d" stroke-width="0.8" opacity="0.8"/><line x1="393.0" y1="527.0" x2="944.1" y2="694.0" stroke="#9dc09d" stroke-width="0.8" opacity="0.8"/><line x1="393.0" y1="527.0" x2="972.5" y2="694.0" stroke="#9dc09d" stroke-width="0.8" opacity="0.8"/><line x1="393.0" y1="527.0" x2="1000.9" y2="694.0" stroke="#9dc09d" stroke-width="0.8" opacity="0.8"/><line x1="393.0" y1="527.0" x2="1029.3" y2="694.0" stroke="#9dc09d" stroke-width="0.8" opacity="0.8"/><line x1="393.0" y1="527.0" x2="1057.7" y2="694.0" stroke="#9dc09d" stroke-width="0.8" opacity="0.8"/><line x1="393.0" y1="527.0" x2="1086.1" y2="694.0" stroke="#9dc09d" stroke-width="0.8" opacity="0.8"/><line x1="393.0" y1="527.0" x2="1100.0" y2="690.6" stroke="#9dc09d" stroke-width="0.8" opacity="0.8"/><line x1="393.0" y1="527.0" x2="1100.0" y2="684.5" stroke="#9dc09d" stroke-width="0.8" opacity="0.8"/><line x1="1033.0" y1="527.0" x2="680.7" y2="694.0" stroke="#9dc09d" stroke-width="0.8" opacity="0.8"/><line x1="1033.0" y1="527.0" x2="652.3" y2="694.0" stroke="#9dc09d" stroke-width="0.8" opacity="0.8"/><line x1="1033.0" y1="527.0" x2="623.9" y2="694.0" stroke="#9dc09d" stroke-width="0.8" opacity="0.8"/><line x1="1033.0" y1="527.0" x2="595.5" y2="694.0" stroke="#9dc09d" stroke-width="0.8" opacity="0.8"/><line x1="1033.0" y1="527.0" x2="567.1" y2="694.0" stroke="#9dc09d" stroke-width="0.8" opacity="0.8"/><line x1="1033.0" y1="527.0" x2="538.7" y2="694.0" stroke="#9dc09d" stroke-width="0.8" opacity="0.8"/><line x1="1033.0" y1="527.0" x2="510.3" y2="694.0" stroke="#9dc09d" stroke-width="0.8" opacity="0.8"/><line x1="1033.0" y1="527.0" x2="481.9" y2="694.0" stroke="#9dc09d" stroke-width="0.8" opacity="0.8"/><line x1="1033.0" y1="527.0" x2="453.5" y2="694.0" stroke="#9dc09d" stroke-width="0.8" opacity="0.8"/><line x1="1033.0" y1="527.0" x2="425.1" y2="694.0" stroke="#9dc09d" stroke-width="0.8" opacity="0.8"/><line x1="1033.0" y1="527.0" x2="396.7" y2="694.0" stroke="#9dc09d" stroke-width="0.8" opacity="0.8"/><line x1="1033.0" y1="527.0" x2="368.3" y2="694.0" stroke="#9dc09d" stroke-width="0.8" opacity="0.8"/><line x1="1033.0" y1="527.0" x2="339.9" y2="694.0" stroke="#9dc09d" stroke-width="0.8" opacity="0.8"/><line x1="1033.0" y1="527.0" x2="326.0" y2="690.6" stroke="#9dc09d" stroke-width="0.8" opacity="0.8"/><line x1="1033.0" y1="527.0" x2="326.0" y2="684.5" stroke="#9dc09d" stroke-width="0.8" opacity="0.8"/><line x1="326.0" y1="527.0" x2="1100.0" y2="527.0" stroke="#b4ccb4" stroke-width="1" opacity="0.7"/><line x1="326.0" y1="694.0" x2="1100.0" y2="694.0" stroke="#a9c7a9" stroke-width="1.5" opacity="0.85"/><line x1="713.0" y1="692.0" x2="584.7" y2="625.8" stroke="#3f76cf" stroke-width="0.9"/><line x1="713.0" y1="672.1" x2="584.7" y2="613.9" stroke="#3f76cf" stroke-width="0.9"/><line x1="713.0" y1="652.3" x2="584.7" y2="602.0" stroke="#3f76cf" stroke-width="0.9"/><line x1="713.0" y1="632.5" x2="584.7" y2="590.2" stroke="#3f76cf" stroke-width="0.9"/><line x1="713.0" y1="612.6" x2="584.7" y2="578.3" stroke="#3f76cf" stroke-width="0.9"/><line x1="713.0" y1="592.8" x2="584.7" y2="566.4" stroke="#3f76cf" stroke-width="0.9"/><line x1="713.0" y1="572.9" x2="584.7" y2="554.5" stroke="#3f76cf" stroke-width="0.9"/><line x1="713.0" y1="553.0" x2="584.7" y2="542.6" stroke="#3f76cf" stroke-width="0.9"/><line x1="713.0" y1="533.2" x2="584.7" y2="530.7" stroke="#3f76cf" stroke-width="0.9"/><line x1="713.0" y1="513.4" x2="584.7" y2="518.8" stroke="#3f76cf" stroke-width="0.9"/><line x1="713.0" y1="493.5" x2="584.7" y2="506.9" stroke="#3f76cf" stroke-width="0.9"/><line x1="713.0" y1="473.6" x2="584.7" y2="495.0" stroke="#3f76cf" stroke-width="0.9"/><line x1="713.0" y1="453.8" x2="584.7" y2="483.2" stroke="#3f76cf" stroke-width="0.9"/><line x1="713.0" y1="433.9" x2="584.7" y2="471.3" stroke="#3f76cf" stroke-width="0.9"/><line x1="713.0" y1="414.1" x2="584.7" y2="459.4" stroke="#3f76cf" stroke-width="0.9"/><line x1="713.0" y1="394.2" x2="584.7" y2="447.5" stroke="#3f76cf" stroke-width="0.9"/><line x1="713.0" y1="374.4" x2="584.7" y2="435.6" stroke="#3f76cf" stroke-width="0.9"/><line x1="713.0" y1="360.0" x2="584.7" y2="427.0" stroke="#3f76cf" stroke-width="0.9"/><line x1="699.3" y1="367.1" x2="699.3" y2="684.9" stroke="#3f76cf" stroke-width="0.9"/><line x1="686.8" y1="373.7" x2="686.8" y2="678.5" stroke="#3f76cf" stroke-width="0.9"/><line x1="675.2" y1="379.7" x2="675.2" y2="672.5" stroke="#3f76cf" stroke-width="0.9"/><line x1="664.5" y1="385.3" x2="664.5" y2="667.0" stroke="#3f76cf" stroke-width="0.9"/><line x1="654.6" y1="390.5" x2="654.6" y2="661.9" stroke="#3f76cf" stroke-width="0.9"/><line x1="645.4" y1="395.3" x2="645.4" y2="657.1" stroke="#3f76cf" stroke-width="0.9"/><line x1="636.8" y1="399.8" x2="636.8" y2="652.7" stroke="#3f76cf" stroke-width="0.9"/><line x1="628.8" y1="403.9" x2="628.8" y2="648.6" stroke="#3f76cf" stroke-width="0.9"/><line x1="621.3" y1="407.9" x2="621.3" y2="644.7" stroke="#3f76cf" stroke-width="0.9"/><line x1="614.2" y1="411.5" x2="614.2" y2="641.1" stroke="#3f76cf" stroke-width="0.9"/><line x1="607.6" y1="415.0" x2="607.6" y2="637.7" stroke="#3f76cf" stroke-width="0.9"/><line x1="601.4" y1="418.3" x2="601.4" y2="634.4" stroke="#3f76cf" stroke-width="0.9"/><line x1="595.5" y1="421.3" x2="595.5" y2="631.4" stroke="#3f76cf" stroke-width="0.9"/><line x1="589.9" y1="424.2" x2="589.9" y2="628.5" stroke="#3f76cf" stroke-width="0.9"/><line x1="584.7" y1="427.0" x2="584.7" y2="625.8" stroke="#3f76cf" stroke-width="0.9"/><line x1="713.0" y1="360.0" x2="393.0" y2="527.0" stroke="#3f76cf" stroke-width="0.8"/><line x1="713.0" y1="692.0" x2="393.0" y2="527.0" stroke="#3f76cf" stroke-width="1.7"/><line x1="713.0" y1="692.0" x2="841.3" y2="625.8" stroke="#ec8a2c" stroke-width="0.9"/><line x1="713.0" y1="672.1" x2="841.3" y2="613.9" stroke="#ec8a2c" stroke-width="0.9"/><line x1="713.0" y1="652.3" x2="841.3" y2="602.0" stroke="#ec8a2c" stroke-width="0.9"/><line x1="713.0" y1="632.5" x2="841.3" y2="590.2" stroke="#ec8a2c" stroke-width="0.9"/><line x1="713.0" y1="612.6" x2="841.3" y2="578.3" stroke="#ec8a2c" stroke-width="0.9"/><line x1="713.0" y1="592.8" x2="841.3" y2="566.4" stroke="#ec8a2c" stroke-width="0.9"/><line x1="713.0" y1="572.9" x2="841.3" y2="554.5" stroke="#ec8a2c" stroke-width="0.9"/><line x1="713.0" y1="553.0" x2="841.3" y2="542.6" stroke="#ec8a2c" stroke-width="0.9"/><line x1="713.0" y1="533.2" x2="841.3" y2="530.7" stroke="#ec8a2c" stroke-width="0.9"/><line x1="713.0" y1="513.4" x2="841.3" y2="518.8" stroke="#ec8a2c" stroke-width="0.9"/><line x1="713.0" y1="493.5" x2="841.3" y2="506.9" stroke="#ec8a2c" stroke-width="0.9"/><line x1="713.0" y1="473.6" x2="841.3" y2="495.0" stroke="#ec8a2c" stroke-width="0.9"/><line x1="713.0" y1="453.8" x2="841.3" y2="483.2" stroke="#ec8a2c" stroke-width="0.9"/><line x1="713.0" y1="433.9" x2="841.3" y2="471.3" stroke="#ec8a2c" stroke-width="0.9"/><line x1="713.0" y1="414.1" x2="841.3" y2="459.4" stroke="#ec8a2c" stroke-width="0.9"/><line x1="713.0" y1="394.2" x2="841.3" y2="447.5" stroke="#ec8a2c" stroke-width="0.9"/><line x1="713.0" y1="374.4" x2="841.3" y2="435.6" stroke="#ec8a2c" stroke-width="0.9"/><line x1="713.0" y1="360.0" x2="841.3" y2="427.0" stroke="#ec8a2c" stroke-width="0.9"/><line x1="726.7" y1="367.1" x2="726.7" y2="684.9" stroke="#ec8a2c" stroke-width="0.9"/><line x1="739.2" y1="373.7" x2="739.2" y2="678.5" stroke="#ec8a2c" stroke-width="0.9"/><line x1="750.8" y1="379.7" x2="750.8" y2="672.5" stroke="#ec8a2c" stroke-width="0.9"/><line x1="761.5" y1="385.3" x2="761.5" y2="667.0" stroke="#ec8a2c" stroke-width="0.9"/><line x1="771.4" y1="390.5" x2="771.4" y2="661.9" stroke="#ec8a2c" stroke-width="0.9"/><line x1="780.6" y1="395.3" x2="780.6" y2="657.1" stroke="#ec8a2c" stroke-width="0.9"/><line x1="789.2" y1="399.8" x2="789.2" y2="652.7" stroke="#ec8a2c" stroke-width="0.9"/><line x1="797.2" y1="403.9" x2="797.2" y2="648.6" stroke="#ec8a2c" stroke-width="0.9"/><line x1="804.7" y1="407.9" x2="804.7" y2="644.7" stroke="#ec8a2c" stroke-width="0.9"/><line x1="811.8" y1="411.5" x2="811.8" y2="641.1" stroke="#ec8a2c" stroke-width="0.9"/><line x1="818.4" y1="415.0" x2="818.4" y2="637.7" stroke="#ec8a2c" stroke-width="0.9"/><line x1="824.6" y1="418.3" x2="824.6" y2="634.4" stroke="#ec8a2c" stroke-width="0.9"/><line x1="830.5" y1="421.3" x2="830.5" y2="631.4" stroke="#ec8a2c" stroke-width="0.9"/><line x1="836.1" y1="424.2" x2="836.1" y2="628.5" stroke="#ec8a2c" stroke-width="0.9"/><line x1="841.3" y1="427.0" x2="841.3" y2="625.8" stroke="#ec8a2c" stroke-width="0.9"/><line x1="713.0" y1="360.0" x2="1033.0" y2="527.0" stroke="#ec8a2c" stroke-width="0.8"/><line x1="713.0" y1="692.0" x2="1033.0" y2="527.0" stroke="#ec8a2c" stroke-width="1.7"/><line x1="713.0" y1="360.0" x2="713.0" y2="692.0" stroke="#ec8a2c" stroke-width="1.2"/><line x1="712.0" y1="360.0" x2="712.0" y2="692.0" stroke="#3f76cf" stroke-width="0.8"/><line x1="713.0" y1="692.0" x2="713.0" y2="718.0" stroke="#9ab89a" stroke-width="0.8"/><line x1="713.0" y1="692.0" x2="691.0" y2="704.0" stroke="#ec8a2c" stroke-width="0.7"/><line x1="713.0" y1="692.0" x2="735.0" y2="704.0" stroke="#3f76cf" stroke-width="0.7"/><path d="M326 522.8 L330.2 527 L326 531.2 L321.8 527 Z" fill="#fff" stroke="#3a3a3a" stroke-width="1.1"/><path d="M1100 522.8 L1104.2 527 L1100 531.2 L1095.8 527 Z" fill="#fff" stroke="#3a3a3a" stroke-width="1.1"/><path d="M326 689.8 L330.2 694 L326 698.2 L321.8 694 Z" fill="#fff" stroke="#3a3a3a" stroke-width="1.1"/><path d="M1100 689.8 L1104.2 694 L1100 698.2 L1095.8 694 Z" fill="#fff" stroke="#3a3a3a" stroke-width="1.1"/><path d="M713 355.5 L717.5 360 L713 364.5 L708.5 360 Z" fill="#fff" stroke="#666" stroke-width="1.1"/><path d="M553 606 L557 610 L553 614 L549 610 Z" fill="#fff" stroke="#666" stroke-width="1.1"/><path d="M873 606 L877 610 L873 614 L869 610 Z" fill="#fff" stroke="#666" stroke-width="1.1"/><path d="M713 675 L717 679 L713 683 L709 679 Z" fill="#fff" stroke="#666" stroke-width="1.1"/><circle cx="393" cy="527" r="4" fill="#fff" stroke="#222" stroke-width="1.1"/><circle cx="1033" cy="527" r="4" fill="#fff" stroke="#222" stroke-width="1.1"/><circle cx="713" cy="692" r="4.3" fill="#fff" stroke="#333" stroke-width="1.1"/><circle cx="691" cy="704" r="4" fill="#e8e8e8" stroke="#666" stroke-width="1"/><circle cx="691" cy="704" r="1.8" fill="#666"/><circle cx="735" cy="704" r="4" fill="#e8e8e8" stroke="#666" stroke-width="1"/><circle cx="735" cy="704" r="1.8" fill="#666"/><circle cx="713" cy="718" r="4" fill="#e8e8e8" stroke="#666" stroke-width="1"/><circle cx="713" cy="718" r="1.8" fill="#666"/></svg>
<div class="t" id="hl" style="left:194.5px;top:330px;font-size:40.5px;font-weight:bold;color:#000;transform-origin:0 0;transform:scaleX(0.818);-webkit-text-stroke:2.8px #000;letter-spacing:0px;height:44px;line-height:44px">Keep Curiosity Keep Learning</div>
<div class="a" style="left:190px;top:368px;width:477px;height:1px;background:#4a7be0;"></div>
<svg class="a" style="left:100px;top:120px;" width="60" height="60" viewBox="0 0 60 60"><path d="M7 7.5 H30 A22.5 22.5 0 1 1 7.5 30 V7.5 Z" fill="#808080" stroke="#474747" stroke-width="1.2" stroke-linejoin="round"/><circle cx="30" cy="30" r="19.5" fill="#d5d5d5" stroke="#2c2c2c" stroke-width="1.3"/><path d="M19.5 23.5 L29.6 17.6 V30.4 L19.5 36 Z" fill="#1f6be9" stroke="#223a66" stroke-width="0.7"/><path d="M30.4 17.6 L41 23.5 V36 L30.4 30.4 Z" fill="#b9b4b4" stroke="#333" stroke-width="0.7"/><path d="M30 31 L41 36.6 L30 42.6 L19.5 36.6 Z" fill="#fff" stroke="#333" stroke-width="0.7"/><path d="M10 9.5 L14 13.5 M14 9.5 L10 13.5" stroke="#f4f4f4" stroke-width="1.5"/></svg>
<div class="a" style="left:73px;top:300px;width:206px;height:48px;background:#535353;box-shadow:0 0 0 1px #4a4a4a"></div>
<div class="a" style="left:271px;top:300px;width:8px;height:48px;background:#5e5e5e;"></div>
<svg class="a" style="left:273px;top:320px;" width="4" height="6" viewBox="0 0 4 6"><path d="M0 0 L4 3 L0 6 Z" fill="#d0d0d0"/></svg>
<div class="a" style="left:78px;top:308px;width:5px;height:5px;background:#d8d8d8;"></div>
<svg class="a" style="left:91px;top:302px;" width="20" height="20" viewBox="0 0 20 20"><path d="M2 2 L10.5 5.5 V14 L2 18 Z M5 3.3 V16.5 M8 4.5 V15.2 M2 7.3 L10.5 8.3 M2 12.6 L10.5 11.2" fill="none" stroke="#d2d2d2" stroke-width="1.1"/><path d="M10.5 10.5 L18 18.5 H3 Z" fill="#888" opacity="0.8"/><path d="M10.5 14 H14.5 M8 16 H17 M4 18.2 H19" stroke="#666" stroke-width="0.9"/></svg>
<div class="t " style="left:116px;top:306px;font-size:12.5px;color:#3f8fe8;letter-spacing:0.3px">透视网格工具</div>
<div class="t num" style="left:207px;top:305.5px;font-size:12.5px;color:#3f8fe8;letter-spacing:0.82px;">(Shift+P)</div>
<svg class="a" style="left:91px;top:326px;" width="20" height="18" viewBox="0 0 20 18"><path d="M1 1 L9.5 8 L5.5 8.3 L3 12.5 Z" fill="#d2d2d2"/><path d="M13.5 6.5 L18 8.5 V13.5 L13.5 16 L9 13.5 V8.5 Z" fill="#d2d2d2"/><path d="M9 8.5 L13.5 10.8 L18 8.5 M13.5 10.8 V16" fill="none" stroke="#535353" stroke-width="1"/></svg>
<div class="t " style="left:116px;top:330px;font-size:12.5px;color:#f0f0f0;letter-spacing:0.3px">透视选区工具</div>
<div class="t num" style="left:207px;top:329.5px;font-size:12.5px;color:#f0f0f0;letter-spacing:0.59px;">(Shift+V)</div>
<div class="a" style="left:79px;top:324px;width:199px;height:22px;border:2px solid #d8232f"></div>
<div class="a" style="left:78px;top:934px;width:1230px;height:18px;background:#535353;"></div>
<div class="a" style="left:78px;top:934px;width:1230px;height:1px;background:#4a4a4a;"></div>
<div class="a" style="left:80px;top:936px;width:53px;height:15px;background:#454545;"></div>
<div class="t num" style="left:83px;top:937.5px;font-size:12.5px;color:#f0f0f0;letter-spacing:-0.30px;">66.67%</div>
<svg class="a" style="left:136px;top:942px" width="8" height="5" viewBox="0 0 8 5"><path d="M0.8 0.8 L4.0 4.2 L7.2 0.8" fill="none" stroke="#d0d0d0" stroke-width="1.6"/></svg>
<div class="a" style="left:150px;top:936px;width:1px;height:15px;background:#484848;"></div>
<svg class="a" style="left:158px;top:939px;" width="26" height="9" viewBox="0 0 26 9"><path d="M1 0 V9 M8 0 L3 4.5 L8 9 Z M24 0 L19 4.5 L24 9 Z" fill="#707070" stroke="#707070" stroke-width="1"/></svg>
<div class="a" style="left:192px;top:936px;width:41px;height:15px;background:#454545;"></div>
<div class="t num" style="left:195px;top:937.5px;font-size:12.5px;color:#f0f0f0;letter-spacing:-0.25px;">1</div>
<svg class="a" style="left:236px;top:942px" width="8" height="5" viewBox="0 0 8 5"><path d="M0.8 0.8 L4.0 4.2 L7.2 0.8" fill="none" stroke="#d0d0d0" stroke-width="1.6"/></svg>
<div class="a" style="left:250px;top:936px;width:1px;height:15px;background:#484848;"></div>
<svg class="a" style="left:258px;top:939px;" width="28" height="9" viewBox="0 0 28 9"><path d="M2 0 L7 4.5 L2 9 Z M18 0 L23 4.5 L18 9 Z M26 0 V9" fill="#707070" stroke="#707070" stroke-width="1"/></svg>
<div class="a" style="left:292px;top:936px;width:1px;height:15px;background:#484848;"></div>
<div class="t " style="left:368px;top:939px;font-size:12px;color:#b8b8b8;">透视网格</div>
<svg class="a" style="left:497px;top:938px;" width="7" height="10" viewBox="0 0 7 10"><path d="M0 0 L7 5 L0 10 Z" fill="#e0e0e0"/></svg>
<div class="a" style="left:510px;top:935px;width:780px;height:17px;background:#565656;"></div>
<svg class="a" style="left:515px;top:938px;" width="6" height="9" viewBox="0 0 6 9"><path d="M5 1 L1.5 4.5 L5 8" fill="none" stroke="#8c8c8c" stroke-width="1.5"/></svg>
<svg class="a" style="left:1279px;top:938px;" width="6" height="9" viewBox="0 0 6 9"><path d="M1 1 L4.5 4.5 L1 8" fill="none" stroke="#8c8c8c" stroke-width="1.5"/></svg>
<div class="a" style="left:885px;top:937px;width:27px;height:13px;background:#686868;border-radius:7px"></div>
<div class="a" style="left:1290px;top:934px;width:18px;height:18px;background:#535353;"></div>
<div class="a" style="left:1066px;top:216px;width:242px;height:275px;background:#535353;box-shadow:-1px 1px 3px rgba(0,0,0,.45);border:1px solid #3c3c3c"></div>
<div class="a" style="left:1067px;top:217px;width:240px;height:31px;background:#424242;"></div>
<div class="a" style="left:1067px;top:217px;width:240px;height:1px;background:#3a3a3a;"></div>
<div class="t " style="left:1076px;top:228px;font-size:12.5px;color:#a8a8a8;">画笔</div>
<div class="a" style="left:1109px;top:221px;width:43px;height:27px;background:#535353;"></div>
<div class="t " style="left:1118px;top:228px;font-size:12.5px;color:#f0f0f0;">符号</div>
<div class="a" style="left:1067px;top:221px;width:1px;height:27px;background:#4a4a4a;"></div>
<div class="a" style="left:1108px;top:221px;width:1px;height:27px;background:#383838;"></div>
<svg class="a" style="left:1266px;top:230px;" width="10" height="7" viewBox="0 0 10 7"><path d="M1 0.5 L4 3.5 L1 6.5 M6 0.5 L9 3.5 L6 6.5" fill="none" stroke="#d8d8d8" stroke-width="1.4"/></svg>
<div class="a" style="left:1283px;top:227px;width:1px;height:13px;background:#a0a0a0;"></div>
<div class="a" style="left:1291px;top:229px;width:11px;height:1px;background:#d0d0d0;"></div>
<div class="a" style="left:1291px;top:232px;width:11px;height:1px;background:#d0d0d0;"></div>
<div class="a" style="left:1291px;top:235px;width:11px;height:1px;background:#d0d0d0;"></div>
<div class="a" style="left:1291px;top:238px;width:11px;height:1px;background:#d0d0d0;"></div>
<div class="a" style="left:1072px;top:251px;width:230px;height:211px;border:1px solid #5d5d5d;border-radius:2px"></div>
<svg class="a" style="left:1073px;top:254px" width="32" height="32" viewBox="0 0 32 32"><rect width="32" height="32" fill="#e9e9e9"/><defs><linearGradient id="sb" x1="0" y1="0" x2="0" y2="1"><stop offset="0" stop-color="#a6d4ec"/><stop offset=".5" stop-color="#2b5fb4"/><stop offset=".62" stop-color="#3f78c6"/><stop offset="1" stop-color="#6fa3dc"/></linearGradient></defs><rect x="2" y="8.5" width="28" height="15" fill="url(#sb)"/></svg>
<svg class="a" style="left:1106px;top:254px" width="32" height="32" viewBox="0 0 32 32"><rect width="32" height="32" fill="#e9e9e9"/><g fill="#000"><circle cx="15" cy="17" r="6.5"/><circle cx="20" cy="12" r="3"/><circle cx="10" cy="22" r="3"/><circle cx="22" cy="22" r="2.2"/><circle cx="8" cy="12" r="2"/><circle cx="25" cy="7" r="2"/><circle cx="14" cy="6" r="1.5"/><circle cx="5" cy="27" r="1.6"/><circle cx="24" cy="16" r="2"/><circle cx="19" cy="26" r="1.8"/><path d="M15 17 L26 6 L24 10 Z M15 17 L4 12 L9 15 Z M15 17 L12 28 L14 24 Z"/></g></svg>
<svg class="a" style="left:1139px;top:254px" width="32" height="32" viewBox="0 0 32 32"><rect width="32" height="32" fill="#e9e9e9"/><defs><linearGradient id="so" x1="0" y1="0" x2="0" y2="1"><stop offset="0" stop-color="#fbc67a"/><stop offset=".47" stop-color="#f29a2a"/><stop offset=".5" stop-color="#e17c0a"/><stop offset="1" stop-color="#ee9422"/></linearGradient></defs><circle cx="16" cy="16" r="13.6" fill="#f6a83e"/><circle cx="16" cy="16" r="11.3" fill="url(#so)"/></svg>
<svg class="a" style="left:1172px;top:254px" width="32" height="32" viewBox="0 0 32 32"><rect width="32" height="32" fill="#e9e9e9"/><path d="M5 2.5 V16" stroke="#111" stroke-width="1.8"/><path d="M3 4 H16 L3 5.6 Z" fill="#111"/><path d="M3 8 H7" stroke="#111" stroke-width="0.8"/><path d="M25 3 v3 h3 M26 4.5 h3 M4 26 h3 v3 M5 27.5 h3 M27 25 v3 h-3 M28 26.5 h-3" fill="none" stroke="#666" stroke-width="0.8"/></svg>
<svg class="a" style="left:1205px;top:254px" width="32" height="32" viewBox="0 0 32 32"><rect width="32" height="32" fill="#e9e9e9"/><g fill="none" stroke="#4e4e4e" stroke-width="0.45"><ellipse cx="16" cy="16" rx="13.2" ry="8.8" transform="rotate(0.0 16 16)"/><ellipse cx="16" cy="16" rx="13.2" ry="8.8" transform="rotate(25.7 16 16)"/><ellipse cx="16" cy="16" rx="13.2" ry="8.8" transform="rotate(51.4 16 16)"/><ellipse cx="16" cy="16" rx="13.2" ry="8.8" transform="rotate(77.1 16 16)"/><ellipse cx="16" cy="16" rx="13.2" ry="8.8" transform="rotate(102.9 16 16)"/><ellipse cx="16" cy="16" rx="13.2" ry="8.8" transform="rotate(128.6 16 16)"/><ellipse cx="16" cy="16" rx="13.2" ry="8.8" transform="rotate(154.3 16 16)"/><ellipse cx="16" cy="16" rx="12.4" ry="9.6" transform="rotate(6.0 16 16)"/><ellipse cx="16" cy="16" rx="12.4" ry="9.6" transform="rotate(31.7 16 16)"/><ellipse cx="16" cy="16" rx="12.4" ry="9.6" transform="rotate(57.4 16 16)"/><ellipse cx="16" cy="16" rx="12.4" ry="9.6" transform="rotate(83.1 16 16)"/><ellipse cx="16" cy="16" rx="12.4" ry="9.6" transform="rotate(108.9 16 16)"/><ellipse cx="16" cy="16" rx="12.4" ry="9.6" transform="rotate(134.6 16 16)"/><ellipse cx="16" cy="16" rx="12.4" ry="9.6" transform="rotate(160.3 16 16)"/><ellipse cx="16" cy="16" rx="11.6" ry="10.2" transform="rotate(12.0 16 16)"/><ellipse cx="16" cy="16" rx="11.6" ry="10.2" transform="rotate(37.7 16 16)"/><ellipse cx="16" cy="16" rx="11.6" ry="10.2" transform="rotate(63.4 16 16)"/><ellipse cx="16" cy="16" rx="11.6" ry="10.2" transform="rotate(89.1 16 16)"/><ellipse cx="16" cy="16" rx="11.6" ry="10.2" transform="rotate(114.9 16 16)"/><ellipse cx="16" cy="16" rx="11.6" ry="10.2" transform="rotate(140.6 16 16)"/><ellipse cx="16" cy="16" rx="11.6" ry="10.2" transform="rotate(166.3 16 16)"/></g></svg>
<svg class="a" style="left:1238px;top:254px" width="32" height="32" viewBox="0 0 32 32"><rect width="32" height="32" fill="#e9e9e9"/><ellipse cx="16" cy="7.5" rx="1.7" ry="6.3" fill="#f28774" transform="rotate(0 16 16)"/><ellipse cx="16" cy="7.5" rx="1.7" ry="6.3" fill="#f28774" transform="rotate(15 16 16)"/><ellipse cx="16" cy="7.5" rx="1.7" ry="6.3" fill="#f28774" transform="rotate(30 16 16)"/><ellipse cx="16" cy="7.5" rx="1.7" ry="6.3" fill="#f28774" transform="rotate(45 16 16)"/><ellipse cx="16" cy="7.5" rx="1.7" ry="6.3" fill="#f28774" transform="rotate(60 16 16)"/><ellipse cx="16" cy="7.5" rx="1.7" ry="6.3" fill="#f28774" transform="rotate(75 16 16)"/><ellipse cx="16" cy="7.5" rx="1.7" ry="6.3" fill="#f28774" transform="rotate(90 16 16)"/><ellipse cx="16" cy="7.5" rx="1.7" ry="6.3" fill="#f28774" transform="rotate(105 16 16)"/><ellipse cx="16" cy="7.5" rx="1.7" ry="6.3" fill="#f28774" transform="rotate(120 16 16)"/><ellipse cx="16" cy="7.5" rx="1.7" ry="6.3" fill="#f28774" transform="rotate(135 16 16)"/><ellipse cx="16" cy="7.5" rx="1.7" ry="6.3" fill="#f28774" transform="rotate(150 16 16)"/><ellipse cx="16" cy="7.5" rx="1.7" ry="6.3" fill="#f28774" transform="rotate(165 16 16)"/><ellipse cx="16" cy="7.5" rx="1.7" ry="6.3" fill="#f28774" transform="rotate(180 16 16)"/><ellipse cx="16" cy="7.5" rx="1.7" ry="6.3" fill="#f28774" transform="rotate(195 16 16)"/><ellipse cx="16" cy="7.5" rx="1.7" ry="6.3" fill="#f28774" transform="rotate(210 16 16)"/><ellipse cx="16" cy="7.5" rx="1.7" ry="6.3" fill="#f28774" transform="rotate(225 16 16)"/><ellipse cx="16" cy="7.5" rx="1.7" ry="6.3" fill="#f28774" transform="rotate(240 16 16)"/><ellipse cx="16" cy="7.5" rx="1.7" ry="6.3" fill="#f28774" transform="rotate(255 16 16)"/><ellipse cx="16" cy="7.5" rx="1.7" ry="6.3" fill="#f28774" transform="rotate(270 16 16)"/><ellipse cx="16" cy="7.5" rx="1.7" ry="6.3" fill="#f28774" transform="rotate(285 16 16)"/><ellipse cx="16" cy="7.5" rx="1.7" ry="6.3" fill="#f28774" transform="rotate(300 16 16)"/><ellipse cx="16" cy="7.5" rx="1.7" ry="6.3" fill="#f28774" transform="rotate(315 16 16)"/><ellipse cx="16" cy="7.5" rx="1.7" ry="6.3" fill="#f28774" transform="rotate(330 16 16)"/><ellipse cx="16" cy="7.5" rx="1.7" ry="6.3" fill="#f28774" transform="rotate(345 16 16)"/><ellipse cx="16" cy="9.5" rx="1.3" ry="4.3" fill="#e8624f" transform="rotate(7.5 16 16)"/><ellipse cx="16" cy="9.5" rx="1.3" ry="4.3" fill="#e8624f" transform="rotate(22.5 16 16)"/><ellipse cx="16" cy="9.5" rx="1.3" ry="4.3" fill="#e8624f" transform="rotate(37.5 16 16)"/><ellipse cx="16" cy="9.5" rx="1.3" ry="4.3" fill="#e8624f" transform="rotate(52.5 16 16)"/><ellipse cx="16" cy="9.5" rx="1.3" ry="4.3" fill="#e8624f" transform="rotate(67.5 16 16)"/><ellipse cx="16" cy="9.5" rx="1.3" ry="4.3" fill="#e8624f" transform="rotate(82.5 16 16)"/><ellipse cx="16" cy="9.5" rx="1.3" ry="4.3" fill="#e8624f" transform="rotate(97.5 16 16)"/><ellipse cx="16" cy="9.5" rx="1.3" ry="4.3" fill="#e8624f" transform="rotate(112.5 16 16)"/><ellipse cx="16" cy="9.5" rx="1.3" ry="4.3" fill="#e8624f" transform="rotate(127.5 16 16)"/><ellipse cx="16" cy="9.5" rx="1.3" ry="4.3" fill="#e8624f" transform="rotate(142.5 16 16)"/><ellipse cx="16" cy="9.5" rx="1.3" ry="4.3" fill="#e8624f" transform="rotate(157.5 16 16)"/><ellipse cx="16" cy="9.5" rx="1.3" ry="4.3" fill="#e8624f" transform="rotate(172.5 16 16)"/><ellipse cx="16" cy="9.5" rx="1.3" ry="4.3" fill="#e8624f" transform="rotate(187.5 16 16)"/><ellipse cx="16" cy="9.5" rx="1.3" ry="4.3" fill="#e8624f" transform="rotate(202.5 16 16)"/><ellipse cx="16" cy="9.5" rx="1.3" ry="4.3" fill="#e8624f" transform="rotate(217.5 16 16)"/><ellipse cx="16" cy="9.5" rx="1.3" ry="4.3" fill="#e8624f" transform="rotate(232.5 16 16)"/><ellipse cx="16" cy="9.5" rx="1.3" ry="4.3" fill="#e8624f" transform="rotate(247.5 16 16)"/><ellipse cx="16" cy="9.5" rx="1.3" ry="4.3" fill="#e8624f" transform="rotate(262.5 16 16)"/><ellipse cx="16" cy="9.5" rx="1.3" ry="4.3" fill="#e8624f" transform="rotate(277.5 16 16)"/><ellipse cx="16" cy="9.5" rx="1.3" ry="4.3" fill="#e8624f" transform="rotate(292.5 16 16)"/><ellipse cx="16" cy="9.5" rx="1.3" ry="4.3" fill="#e8624f" transform="rotate(307.5 16 16)"/><ellipse cx="16" cy="9.5" rx="1.3" ry="4.3" fill="#e8624f" transform="rotate(322.5 16 16)"/><ellipse cx="16" cy="9.5" rx="1.3" ry="4.3" fill="#e8624f" transform="rotate(337.5 16 16)"/><ellipse cx="16" cy="9.5" rx="1.3" ry="4.3" fill="#e8624f" transform="rotate(352.5 16 16)"/><circle cx="16" cy="16" r="4" fill="#b9983a"/><circle cx="16" cy="16" r="2.8" fill="#ead75c"/></svg>
<svg class="a" style="left:1077px;top:467px;" width="16" height="11" viewBox="0 0 16 11"><rect x="0" y="1" width="2" height="9" fill="#d0d0d0"/><rect x="3.5" y="0" width="2" height="10" fill="#d0d0d0"/><path d="M7 1 L10.5 10" stroke="#d0d0d0" stroke-width="2"/><path d="M11.5 8.5 h4 l-2 2.3 Z" fill="#d0d0d0"/></svg>
<svg class="a" style="left:1159px;top:467px;" width="11" height="11" viewBox="0 0 11 11"><path d="M2 0 V6 H9 M6 3 L9.5 6 L6 9" fill="none" stroke="#707070" stroke-width="1.6"/></svg>
<svg class="a" style="left:1183px;top:466px;" width="15" height="12" viewBox="0 0 15 12"><path d="M5.5 3.5 H3.5 A2.5 2.5 0 0 0 3.5 8.5 H5.5 M9.5 3.5 H11.5 A2.5 2.5 0 0 1 11.5 8.5 H9.5 M5 6 H10 M2 0.5 L13 11.5" fill="none" stroke="#707070" stroke-width="1.4"/></svg>
<svg class="a" style="left:1211px;top:467px;" width="11" height="11" viewBox="0 0 11 11"><rect x=".6" y=".6" width="9.8" height="9.8" fill="none" stroke="#707070" stroke-width="1.2"/><path d="M1 3.5 H10 M1 6 H10 M1 8.5 H10" stroke="#707070" stroke-width="0.8"/></svg>
<svg class="a" style="left:1237px;top:467px;" width="11" height="11" viewBox="0 0 11 11"><path d="M0 0 H11 V11 H4.5 V6.5 H0 Z" fill="#d0d0d0"/><path d="M0.7 7.5 L3.5 10.3" stroke="#d0d0d0" stroke-width="1"/></svg>
<svg class="a" style="left:1263px;top:466px;" width="11" height="12" viewBox="0 0 11 12"><path d="M0 2.2 H11 M3.5 2 V0.6 H7.5 V2" fill="none" stroke="#707070" stroke-width="1.2"/><path d="M1.3 3.5 H9.7 V11.5 H1.3 Z" fill="none" stroke="#707070" stroke-width="1.2"/><path d="M4 5 V10 M7 5 V10" stroke="#707070" stroke-width="0.9"/></svg>
<div class="a" style="left:1067px;top:482px;width:240px;height:1px;background:#3a3a3a;"></div>
<div class="a" style="left:1067px;top:483px;width:240px;height:7px;background:#4c4c4c;"></div>
<div class="a" style="left:1176px;top:485px;width:1px;height:4px;background:#333;"></div>
<div class="a" style="left:1178px;top:485px;width:1px;height:4px;background:#333;"></div>
<div class="a" style="left:1180px;top:485px;width:1px;height:4px;background:#333;"></div>
<div class="a" style="left:1182px;top:485px;width:1px;height:4px;background:#333;"></div>
<div class="a" style="left:1184px;top:485px;width:1px;height:4px;background:#333;"></div>
<div class="a" style="left:1186px;top:485px;width:1px;height:4px;background:#333;"></div>
<div class="a" style="left:1188px;top:485px;width:1px;height:4px;background:#333;"></div>
<div class="a" style="left:1190px;top:485px;width:1px;height:4px;background:#333;"></div>
<div class="a" style="left:1192px;top:485px;width:1px;height:4px;background:#333;"></div>
<div class="a" style="left:1194px;top:485px;width:1px;height:4px;background:#333;"></div>
<div class="a" style="left:1308px;top:69px;width:291px;height:887px;background:#535353;"></div>
<div class="a" style="left:1307px;top:69px;width:2px;height:887px;background:#3a3a3a;"></div>
<div class="a" style="left:1309px;top:69px;width:38px;height:12px;background:#424242;"></div>
<svg class="a" style="left:1333px;top:72px;" width="8" height="6" viewBox="0 0 8 6"><path d="M3.5 0 V5.6 L0.3 2.8 Z M7.5 0 V5.6 L4.3 2.8 Z" fill="#e0e0e0"/></svg>
<div class="a" style="left:1346px;top:69px;width:3px;height:887px;background:#3c3c3c;"></div>
<div class="a" style="left:1318px;top:83px;width:1px;height:5px;background:#3c3c3c;"></div>
<div class="a" style="left:1320px;top:83px;width:1px;height:5px;background:#3c3c3c;"></div>
<div class="a" style="left:1322px;top:83px;width:1px;height:5px;background:#3c3c3c;"></div>
<div class="a" style="left:1324px;top:83px;width:1px;height:5px;background:#3c3c3c;"></div>
<div class="a" style="left:1326px;top:83px;width:1px;height:5px;background:#3c3c3c;"></div>
<div class="a" style="left:1328px;top:83px;width:1px;height:5px;background:#3c3c3c;"></div>
<div class="a" style="left:1330px;top:83px;width:1px;height:5px;background:#3c3c3c;"></div>
<div class="a" style="left:1332px;top:83px;width:1px;height:5px;background:#3c3c3c;"></div>
<div class="a" style="left:1334px;top:83px;width:1px;height:5px;background:#3c3c3c;"></div>
<div class="a" style="left:1336px;top:83px;width:1px;height:5px;background:#3c3c3c;"></div>
<svg class="a" style="left:1317px;top:93px" width="22" height="22" viewBox="0 0 22 22"><circle cx="11.5" cy="11.5" r="6.5" fill="#cfcfcf"/><circle cx="11.5" cy="11.5" r="8.8" fill="none" stroke="#cfcfcf" stroke-width="1.3" stroke-dasharray="2.6 1.6"/></svg>
<svg class="a" style="left:1317px;top:121px" width="22" height="22" viewBox="0 0 22 22"><defs><linearGradient id="qg" x1="0" y1="1" x2="1" y2="0"><stop offset="0" stop-color="#777"/><stop offset="1" stop-color="#e0e0e0"/></linearGradient></defs><path d="M4.5 3 A14 14 0 0 1 18.5 17 L18.5 18 H4.5 Z" fill="url(#qg)" stroke="#cfcfcf" stroke-width="1.4"/></svg>
<div class="a" style="left:1309px;top:148px;width:37px;height:2px;background:#424242;"></div>
<div class="a" style="left:1318px;top:152px;width:1px;height:5px;background:#3c3c3c;"></div>
<div class="a" style="left:1320px;top:152px;width:1px;height:5px;background:#3c3c3c;"></div>
<div class="a" style="left:1322px;top:152px;width:1px;height:5px;background:#3c3c3c;"></div>
<div class="a" style="left:1324px;top:152px;width:1px;height:5px;background:#3c3c3c;"></div>
<div class="a" style="left:1326px;top:152px;width:1px;height:5px;background:#3c3c3c;"></div>
<div class="a" style="left:1328px;top:152px;width:1px;height:5px;background:#3c3c3c;"></div>
<div class="a" style="left:1330px;top:152px;width:1px;height:5px;background:#3c3c3c;"></div>
<div class="a" style="left:1332px;top:152px;width:1px;height:5px;background:#3c3c3c;"></div>
<div class="a" style="left:1334px;top:152px;width:1px;height:5px;background:#3c3c3c;"></div>
<div class="a" style="left:1336px;top:152px;width:1px;height:5px;background:#3c3c3c;"></div>
<svg class="a" style="left:1317px;top:162px" width="22" height="22" viewBox="0 0 22 22"><rect x="3" y="2" width="1.4" height="18" fill="#cfcfcf"/><rect x="6" y="4.5" width="8" height="5.5" fill="#cfcfcf"/><rect x="6" y="12" width="13" height="5.5" fill="#cfcfcf"/></svg>
<svg class="a" style="left:1317px;top:190px" width="22" height="22" viewBox="0 0 22 22"><rect x="4" y="3.5" width="8" height="8" fill="#cfcfcf"/><rect x="11" y="10.5" width="8" height="8" fill="#cfcfcf"/><rect x="8.5" y="7.5" width="6" height="6.5" fill="#535353" stroke="#cfcfcf" stroke-width="1.3"/></svg>
<div class="a" style="left:1309px;top:217px;width:37px;height:2px;background:#424242;"></div>
<div class="a" style="left:1318px;top:221px;width:1px;height:5px;background:#3c3c3c;"></div>
<div class="a" style="left:1320px;top:221px;width:1px;height:5px;background:#3c3c3c;"></div>
<div class="a" style="left:1322px;top:221px;width:1px;height:5px;background:#3c3c3c;"></div>
<div class="a" style="left:1324px;top:221px;width:1px;height:5px;background:#3c3c3c;"></div>
<div class="a" style="left:1326px;top:221px;width:1px;height:5px;background:#3c3c3c;"></div>
<div class="a" style="left:1328px;top:221px;width:1px;height:5px;background:#3c3c3c;"></div>
<div class="a" style="left:1330px;top:221px;width:1px;height:5px;background:#3c3c3c;"></div>
<div class="a" style="left:1332px;top:221px;width:1px;height:5px;background:#3c3c3c;"></div>
<div class="a" style="left:1334px;top:221px;width:1px;height:5px;background:#3c3c3c;"></div>
<div class="a" style="left:1336px;top:221px;width:1px;height:5px;background:#3c3c3c;"></div>
<svg class="a" style="left:1317px;top:231px" width="22" height="22" viewBox="0 0 22 22"><path d="M7 11 H15 L14.5 20 H7.5 Z" fill="#cfcfcf"/><path d="M10 10.5 L9.3 3 L11 1 L12.2 3.5 L11.8 10.5 Z M8 10.5 C7 8 5.5 7.5 4 7.5 C4 5.5 6 4.5 7.5 5.5 C8.5 6.5 9 8.5 9.3 10.5 Z M13 10.5 C13.5 8 14.5 6.5 16 6 C17.5 5.5 19 6.5 18.5 8 C16.5 7.5 15 9 14.5 10.5 Z" fill="#cfcfcf"/></svg>
<div class="a" style="left:1314px;top:259px;width:28px;height:23px;background:#2f2f2f;border-radius:2px"></div>
<svg class="a" style="left:1317px;top:259px" width="22" height="22" viewBox="0 0 22 22"><circle cx="11" cy="6.5" r="4" fill="#cfcfcf"/><circle cx="6.5" cy="12.5" r="4" fill="#cfcfcf"/><circle cx="15.5" cy="12.5" r="4" fill="#cfcfcf"/><path d="M10.3 9 H11.7 L12.3 17 L14.5 19 H7.5 L9.7 17 Z" fill="#cfcfcf"/></svg>
<div class="a" style="left:1309px;top:286px;width:37px;height:2px;background:#424242;"></div>
<div class="a" style="left:1318px;top:290px;width:1px;height:5px;background:#3c3c3c;"></div>
<div class="a" style="left:1320px;top:290px;width:1px;height:5px;background:#3c3c3c;"></div>
<div class="a" style="left:1322px;top:290px;width:1px;height:5px;background:#3c3c3c;"></div>
<div class="a" style="left:1324px;top:290px;width:1px;height:5px;background:#3c3c3c;"></div>
<div class="a" style="left:1326px;top:290px;width:1px;height:5px;background:#3c3c3c;"></div>
<div class="a" style="left:1328px;top:290px;width:1px;height:5px;background:#3c3c3c;"></div>
<div class="a" style="left:1330px;top:290px;width:1px;height:5px;background:#3c3c3c;"></div>
<div class="a" style="left:1332px;top:290px;width:1px;height:5px;background:#3c3c3c;"></div>
<div class="a" style="left:1334px;top:290px;width:1px;height:5px;background:#3c3c3c;"></div>
<div class="a" style="left:1336px;top:290px;width:1px;height:5px;background:#3c3c3c;"></div>
<svg class="a" style="left:1317px;top:300px" width="22" height="22" viewBox="0 0 22 22"><text x="15.5" y="14" font-size="15" font-weight="bold" text-anchor="middle" fill="#cfcfcf" font-family="Liberation Sans,sans-serif">A</text><rect x="3.5" y="12" width="5" height="5" fill="none" stroke="#cfcfcf" stroke-width="1.2"/><rect x="6" y="14.5" width="5" height="5" fill="#535353" stroke="#cfcfcf" stroke-width="1.2"/></svg>
<svg class="a" style="left:1317px;top:328px" width="22" height="22" viewBox="0 0 22 22"><path d="M14 3 H19 M16 3 V15 M18.5 3 V15" stroke="#cfcfcf" stroke-width="1.4" fill="none"/><path d="M16 3 A3.4 3.4 0 0 0 16 9.8 Z" fill="#cfcfcf" stroke="#cfcfcf"/><rect x="3.5" y="12" width="5" height="5" fill="none" stroke="#cfcfcf" stroke-width="1.2"/><rect x="6" y="14.5" width="5" height="5" fill="#535353" stroke="#cfcfcf" stroke-width="1.2"/></svg>
<div class="a" style="left:1309px;top:355px;width:37px;height:2px;background:#424242;"></div>
<div class="a" style="left:1318px;top:359px;width:1px;height:5px;background:#3c3c3c;"></div>
<div class="a" style="left:1320px;top:359px;width:1px;height:5px;background:#3c3c3c;"></div>
<div class="a" style="left:1322px;top:359px;width:1px;height:5px;background:#3c3c3c;"></div>
<div class="a" style="left:1324px;top:359px;width:1px;height:5px;background:#3c3c3c;"></div>
<div class="a" style="left:1326px;top:359px;width:1px;height:5px;background:#3c3c3c;"></div>
<div class="a" style="left:1328px;top:359px;width:1px;height:5px;background:#3c3c3c;"></div>
<div class="a" style="left:1330px;top:359px;width:1px;height:5px;background:#3c3c3c;"></div>
<div class="a" style="left:1332px;top:359px;width:1px;height:5px;background:#3c3c3c;"></div>
<div class="a" style="left:1334px;top:359px;width:1px;height:5px;background:#3c3c3c;"></div>
<div class="a" style="left:1336px;top:359px;width:1px;height:5px;background:#3c3c3c;"></div>
<svg class="a" style="left:1317px;top:369px" width="22" height="22" viewBox="0 0 22 22"><text x="11" y="18.5" font-size="21" font-style="italic" font-weight="bold" text-anchor="middle" fill="#cfcfcf" font-family="Liberation Serif,serif">A</text></svg>
<div class="a" style="left:1309px;top:396px;width:37px;height:2px;background:#424242;"></div>
<div class="a" style="left:1318px;top:400px;width:1px;height:5px;background:#3c3c3c;"></div>
<div class="a" style="left:1320px;top:400px;width:1px;height:5px;background:#3c3c3c;"></div>
<div class="a" style="left:1322px;top:400px;width:1px;height:5px;background:#3c3c3c;"></div>
<div class="a" style="left:1324px;top:400px;width:1px;height:5px;background:#3c3c3c;"></div>
<div class="a" style="left:1326px;top:400px;width:1px;height:5px;background:#3c3c3c;"></div>
<div class="a" style="left:1328px;top:400px;width:1px;height:5px;background:#3c3c3c;"></div>
<div class="a" style="left:1330px;top:400px;width:1px;height:5px;background:#3c3c3c;"></div>
<div class="a" style="left:1332px;top:400px;width:1px;height:5px;background:#3c3c3c;"></div>
<div class="a" style="left:1334px;top:400px;width:1px;height:5px;background:#3c3c3c;"></div>
<div class="a" style="left:1336px;top:400px;width:1px;height:5px;background:#3c3c3c;"></div>
<svg class="a" style="left:1317px;top:410px" width="22" height="22" viewBox="0 0 22 22"><path d="M9 5.5 H3.5 V19 H17 V13" fill="none" stroke="#cfcfcf" stroke-width="1.8"/><path d="M9 13.5 L18 4.5 M12 3.5 H19 V10.5" fill="none" stroke="#cfcfcf" stroke-width="1.8"/></svg>
<div class="a" style="left:1309px;top:437px;width:37px;height:2px;background:#424242;"></div>
<div class="a" style="left:1349px;top:69px;width:245px;height:12px;background:#424242;"></div>
<svg class="a" style="left:1581px;top:72px;" width="8" height="6" viewBox="0 0 8 6"><path d="M0.5 0 V5.6 L3.7 2.8 Z M4.5 0 V5.6 L7.7 2.8 Z" fill="#e0e0e0"/></svg>
<div class="a" style="left:1349px;top:81px;width:245px;height:28px;background:#424242;"></div>
<div class="t " style="left:1359px;top:89px;font-size:12.5px;color:#a4a4a4;">画板</div>
<div class="a" style="left:1392px;top:81px;width:1px;height:28px;background:#3a3a3a;"></div>
<div class="t " style="left:1401px;top:89px;font-size:12.5px;color:#a4a4a4;">链接</div>
<div class="a" style="left:1433px;top:81px;width:1px;height:28px;background:#3a3a3a;"></div>
<div class="a" style="left:1434px;top:81px;width:43px;height:28px;background:#535353;"></div>
<div class="t " style="left:1443px;top:89px;font-size:12.5px;color:#f2f2f2;">图层</div>
<div class="a" style="left:1578px;top:91.0px;width:11px;height:1.1px;background:#cfcfcf;"></div>
<div class="a" style="left:1578px;top:93.4px;width:11px;height:1.1px;background:#cfcfcf;"></div>
<div class="a" style="left:1578px;top:95.8px;width:11px;height:1.1px;background:#cfcfcf;"></div>
<div class="a" style="left:1578px;top:98.2px;width:11px;height:1.1px;background:#cfcfcf;"></div>
<div class="a" style="left:1354px;top:110px;width:235px;height:190px;border:1px solid #5c5c5c;border-radius:3px"></div>
<div class="a" style="left:1355px;top:114px;width:233px;height:22px;background:#4f6580;"></div>
<svg class="a" style="left:1357px;top:119px;" width="15" height="10" viewBox="0 0 15 10"><path d="M0.5 5 C3.5 0.5 11.5 0.5 14.5 5 C11.5 9.5 3.5 9.5 0.5 5 Z" fill="#dcdcdc"/><circle cx="7.5" cy="5" r="2.6" fill="#4f6580"/><circle cx="7.5" cy="5" r="1.2" fill="#dcdcdc"/></svg>
<div class="a" style="left:1398px;top:115px;width:3px;height:21px;background:#4f7df3;"></div>
<svg class="a" style="left:1409px;top:120px;" width="6" height="10" viewBox="0 0 6 10"><path d="M1 1 L5 5 L1 9" fill="none" stroke="#f0f0f0" stroke-width="1.6"/></svg>
<div class="a" style="left:1427px;top:116px;width:19px;height:18px;background:#fff;border:1px solid #000"></div>
<div class="a" style="left:1428px;top:124px;width:17px;height:1px;background:#222;"></div>
<div class="t " style="left:1451px;top:120px;font-size:12.5px;color:#f2f2f2;letter-spacing:0.5px">图层 1</div>
<div class="a" style="left:1559px;top:121px;width:9px;height:9px;border:1.3px solid #e4e4e4;border-radius:50%"></div>
<div class="a" style="left:1573px;top:121px;width:9px;height:9px;background:#4f7df3;border:1px solid #111"></div>
<svg class="a" style="left:1582px;top:114px;" width="6" height="6" viewBox="0 0 6 6"><path d="M0 0 H6 V6 Z" fill="#dcdcdc"/></svg>
<div class="t " style="left:1354px;top:305px;font-size:12.5px;color:#dcdcdc;letter-spacing:0.6px">1 个图层</div>
<svg class="a" style="left:1450px;top:305px;" width="14" height="13" viewBox="0 0 14 13"><circle cx="8.5" cy="5" r="4" fill="none" stroke="#d0d0d0" stroke-width="1.5"/><path d="M5.5 8 L1 12.5" stroke="#d0d0d0" stroke-width="2"/></svg>
<svg class="a" style="left:1477px;top:306px;" width="12" height="12" viewBox="0 0 12 12"><rect x="0.7" y="0.7" width="8" height="8" fill="none" stroke="#d0d0d0" stroke-width="1.4"/><rect x="4" y="4" width="7.3" height="7.3" fill="#d0d0d0" stroke="#535353" stroke-width="0.8"/></svg>
<svg class="a" style="left:1500px;top:306px;" width="16" height="12" viewBox="0 0 16 12"><path d="M1 0.5 V4.5 H5 M3 2.5 L5.5 4.5 L3 6.5" fill="none" stroke="#d0d0d0" stroke-width="1.4"/><path d="M6 1 H16 V11 H10.5 V7 H6 Z" fill="#d0d0d0"/></svg>
<svg class="a" style="left:1530px;top:306px;" width="11" height="11" viewBox="0 0 11 11"><path d="M0 0 H11 V11 H4.5 V6.5 H0 Z" fill="#d0d0d0"/><path d="M0.7 7.5 L3.5 10.3" stroke="#d0d0d0" stroke-width="1"/></svg>
<svg class="a" style="left:1554px;top:305px;" width="11" height="12" viewBox="0 0 11 12"><path d="M0 2.2 H11 M3.5 2 V0.6 H7.5 V2" fill="none" stroke="#6a6a6a" stroke-width="1.2"/><path d="M1.3 3.5 H9.7 V11.5 H1.3 Z" fill="none" stroke="#6a6a6a" stroke-width="1.2"/><path d="M4 5 V10 M7 5 V10" stroke="#6a6a6a" stroke-width="0.9"/></svg>
<div class="a" style="left:1349px;top:321px;width:245px;height:3px;background:#3c3c3c;"></div>
<div class="a" style="left:1349px;top:324px;width:245px;height:28px;background:#424242;"></div>
<div class="t " style="left:1359px;top:332px;font-size:12.5px;color:#a4a4a4;">描边</div>
<div class="a" style="left:1392px;top:324px;width:1px;height:28px;background:#3a3a3a;"></div>
<div class="t " style="left:1401px;top:332px;font-size:12.5px;color:#a4a4a4;">色板</div>
<div class="a" style="left:1433px;top:324px;width:1px;height:28px;background:#3a3a3a;"></div>
<div class="a" style="left:1434px;top:324px;width:66px;height:28px;background:#535353;"></div>
<div class="t " style="left:1443px;top:332px;font-size:12.5px;color:#f2f2f2;">图形样式</div>
<div class="a" style="left:1578px;top:334.0px;width:11px;height:1.1px;background:#cfcfcf;"></div>
<div class="a" style="left:1578px;top:336.4px;width:11px;height:1.1px;background:#cfcfcf;"></div>
<div class="a" style="left:1578px;top:338.8px;width:11px;height:1.1px;background:#cfcfcf;"></div>
<div class="a" style="left:1578px;top:341.2px;width:11px;height:1.1px;background:#cfcfcf;"></div>
<div class="a" style="left:1354px;top:355px;width:235px;height:128px;border:1px solid #5c5c5c;border-radius:3px"></div>
<svg class="a" style="left:1355px;top:358px" width="32" height="32" viewBox="0 0 32 32"><rect width="32" height="32" fill="#e6e6e6"/><rect x="4.5" y="4.5" width="23" height="23" fill="#fff" stroke="#777" stroke-width="1"/><rect x="6.5" y="21.5" width="6" height="6" fill="#222" stroke="#222" stroke-width="1"/><rect x="3.5" y="18.5" width="6" height="6" fill="#fff" stroke="#222" stroke-width="1.2"/></svg>
<svg class="a" style="left:1388px;top:358px" width="32" height="32" viewBox="0 0 32 32"><rect width="32" height="32" fill="#e6e6e6"/><defs><filter id="bl2"><feGaussianBlur stdDeviation="0.8"/></filter></defs><rect x="8.5" y="8" width="17" height="17" fill="#9a9a9a" filter="url(#bl2)"/><rect x="6.5" y="6" width="17" height="17" fill="#fff" stroke="#d8d8d8" stroke-width="0.6"/><rect x="4.5" y="20.5" width="7" height="7" fill="#fff" stroke="#8e1c22" stroke-width="1"/><path d="M5 27 L11 21" stroke="#d22630" stroke-width="1.4"/></svg>
<svg class="a" style="left:1421px;top:358px" width="32" height="32" viewBox="0 0 32 32"><rect width="32" height="32" fill="#e6e6e6"/><rect x="4.5" y="4.5" width="23" height="23" fill="#fff" stroke="#8a8a8a" stroke-width="1"/></svg>
<svg class="a" style="left:1454px;top:358px" width="32" height="32" viewBox="0 0 32 32"><rect width="32" height="32" fill="#e6e6e6"/><rect x="4.5" y="10.5" width="11" height="11" fill="#fff"/><rect x="15.5" y="10.5" width="11.5" height="11" fill="#fff" stroke="#b0b0b0" stroke-width="1"/><rect x="4.5" y="20.5" width="7" height="7" fill="#fff" stroke="#8e1c22" stroke-width="1"/><path d="M5 27 L11 21" stroke="#d22630" stroke-width="1.4"/></svg>
<svg class="a" style="left:1487px;top:358px" width="32" height="32" viewBox="0 0 32 32"><rect width="32" height="32" fill="#e6e6e6"/><defs><linearGradient id="sg5" x1="0" y1="0" x2="1" y2="1"><stop offset="0" stop-color="#ececec"/><stop offset=".55" stop-color="#d2d2d2"/><stop offset="1" stop-color="#9c9c9c"/></linearGradient><linearGradient id="sg5b" x1="0" y1="0" x2="1" y2="1"><stop offset="0" stop-color="#d0d0d0"/><stop offset="1" stop-color="#e6e6e6"/></linearGradient><filter id="bl"><feGaussianBlur stdDeviation="1.1"/></filter></defs><rect x="4.5" y="4.5" width="23" height="23" fill="url(#sg5)" filter="url(#bl)"/><rect x="9" y="8" width="14" height="14" fill="url(#sg5b)" filter="url(#bl)"/></svg>
<svg class="a" style="left:1520px;top:358px" width="32" height="32" viewBox="0 0 32 32"><rect width="32" height="32" fill="#e6e6e6"/><defs><linearGradient id="sg6" x1="0" y1="0" x2="0" y2="1"><stop offset="0" stop-color="#a9e2fa"/><stop offset=".45" stop-color="#4aa6ee"/><stop offset="1" stop-color="#1a5fc2"/></linearGradient><radialGradient id="sg6b" cx=".5" cy="0" r=".6"><stop offset="0" stop-color="#fff" stop-opacity=".85"/><stop offset="1" stop-color="#fff" stop-opacity="0"/></radialGradient></defs><rect x="4" y="4" width="24" height="24" fill="url(#sg6)"/><rect x="4" y="4" width="24" height="24" fill="url(#sg6b)"/><path d="M10 4 V26 M16 4 V27 M22 4 V26" stroke="#bfe6fb" stroke-width="1.6" opacity=".2"/></svg>
<svg class="a" style="left:1355px;top:391px" width="32" height="32" viewBox="0 0 32 32"><rect width="32" height="32" fill="#e6e6e6"/><rect x="4" y="4" width="24" height="24" fill="#4fb32e"/><path d="M4 7 C14 7 22 12 28 15.5 M4 25 C14 25 22 20 28 16.5 M4 13 C12 12.5 20 14.5 28 16 M4 19.5 C12 19.5 20 18 28 16.3" fill="none" stroke="#e6e62e" stroke-width="2"/><path d="M10 4 C16 6 22 9 28 11 M10 28 C16 26 22 23 28 21" fill="none" stroke="#8ed03a" stroke-width="1.6"/></svg>
<svg class="a" style="left:1388px;top:391px" width="32" height="32" viewBox="0 0 32 32"><rect width="32" height="32" fill="#e6e6e6"/><rect x="4" y="4" width="24" height="24" fill="#1f5560"/><path d="M8 6 C9 12 12 14 13 20 M18 8 C16 13 14 15 13 20 M13 20 C12 24 9 26 5 27" fill="none" stroke="#4aa3e8" stroke-width="2.6"/><path d="M27 5 C25 10 22 11 20 8 M14 28 C17 22 22 20 28 19" fill="none" stroke="#5fb4ee" stroke-width="2"/><path d="M4 12 C6 16 6 20 4 22" fill="none" stroke="#2f7f9a" stroke-width="2"/></svg>
<svg class="a" style="left:1360px;top:487px;" width="16" height="11" viewBox="0 0 16 11"><rect x="0" y="1" width="2" height="9" fill="#d0d0d0"/><rect x="3.5" y="0" width="2" height="10" fill="#d0d0d0"/><path d="M7 1 L10.5 10" stroke="#d0d0d0" stroke-width="2"/><path d="M11.5 8.5 h4 l-2 2.3 Z" fill="#d0d0d0"/></svg>
<svg class="a" style="left:1502px;top:486px;" width="15" height="12" viewBox="0 0 15 12"><path d="M5.5 3.5 H3.5 A2.5 2.5 0 0 0 3.5 8.5 H5.5 M9.5 3.5 H11.5 A2.5 2.5 0 0 1 11.5 8.5 H9.5 M5 6 H10 M2 0.5 L13 11.5" fill="none" stroke="#6a6a6a" stroke-width="1.4"/></svg>
<svg class="a" style="left:1530px;top:487px;" width="11" height="11" viewBox="0 0 11 11"><path d="M0 0 H11 V11 H4.5 V6.5 H0 Z" fill="#d0d0d0"/><path d="M0.7 7.5 L3.5 10.3" stroke="#d0d0d0" stroke-width="1"/></svg>
<svg class="a" style="left:1554px;top:486px;" width="11" height="12" viewBox="0 0 11 12"><path d="M0 2.2 H11 M3.5 2 V0.6 H7.5 V2" fill="none" stroke="#6a6a6a" stroke-width="1.2"/><path d="M1.3 3.5 H9.7 V11.5 H1.3 Z" fill="none" stroke="#6a6a6a" stroke-width="1.2"/><path d="M4 5 V10 M7 5 V10" stroke="#6a6a6a" stroke-width="0.9"/></svg>
<div class="a" style="left:1349px;top:501px;width:245px;height:3px;background:#3c3c3c;"></div>
<div class="a" style="left:1349px;top:504px;width:245px;height:28px;background:#424242;"></div>
<div class="t " style="left:1359px;top:512px;font-size:12.5px;color:#a4a4a4;">颜色</div>
<div class="a" style="left:1391px;top:504px;width:1px;height:28px;background:#3a3a3a;"></div>
<div class="a" style="left:1392px;top:504px;width:60px;height:28px;background:#535353;"></div>
<div class="t " style="left:1407px;top:512px;font-size:12.5px;color:#f2f2f2;">透明度</div>
<svg class="a" style="left:1397px;top:514px;" width="6" height="10" viewBox="0 0 6 10"><path d="M0.8 3.6 L3 1 L5.2 3.6 M0.8 6.4 L3 9 L5.2 6.4" fill="none" stroke="#cfcfcf" stroke-width="1.1"/></svg>
<div class="t " style="left:1460px;top:512px;font-size:12.5px;color:#a4a4a4;">渐变</div>
<div class="a" style="left:1492px;top:504px;width:1px;height:28px;background:#3a3a3a;"></div>
<div class="a" style="left:1578px;top:514.0px;width:11px;height:1.1px;background:#cfcfcf;"></div>
<div class="a" style="left:1578px;top:516.4px;width:11px;height:1.1px;background:#cfcfcf;"></div>
<div class="a" style="left:1578px;top:518.8px;width:11px;height:1.1px;background:#cfcfcf;"></div>
<div class="a" style="left:1578px;top:521.2px;width:11px;height:1.1px;background:#cfcfcf;"></div>
<div class="a" style="left:1355px;top:538px;width:85px;height:21px;background:#4a4a4a;border:1px solid #616161;border-radius:3px"></div>
<div class="t " style="left:1362px;top:543px;font-size:12px;color:#f0f0f0;letter-spacing:1px">正常</div>
<svg class="a" style="left:1427px;top:546px" width="8" height="5" viewBox="0 0 8 5"><path d="M0.8 0.8 L4.0 4.2 L7.2 0.8" fill="none" stroke="#d0d0d0" stroke-width="1.6"/></svg>
<div class="t " style="left:1446px;top:543px;font-size:12px;color:#c8c8c8;letter-spacing:0.5px">不透明度 :</div>
<div class="a" style="left:1506px;top:538px;width:68px;height:21px;background:#454545;border:1px solid #616161;border-radius:2px"></div>
<div class="a" style="left:1556px;top:539px;width:1px;height:19px;background:#616161;"></div>
<div class="t num" style="left:1509px;top:541.5px;font-size:12.5px;color:#f0f0f0;letter-spacing:-0.30px;">100%</div>
<svg class="a" style="left:1562px;top:544px;" width="6" height="9" viewBox="0 0 6 9"><path d="M1 1 L5 4.5 L1 8" fill="none" stroke="#e0e0e0" stroke-width="1.6"/></svg>
<div class="a" style="left:1355px;top:565px;width:233px;height:1px;background:#5e5e5e;"></div>
<div class="a" style="left:1357px;top:576px;width:51px;height:51px;background:#fff;border:1px solid #000"></div>
<div class="t " style="left:1360px;top:598px;font-size:3.4px;color:#000;font-weight:bold;-webkit-text-stroke:0.5px #000;letter-spacing:-0.05px">Keep Curiosity Keep Learning</div>
<div class="a" style="left:1436px;top:576px;width:51px;height:51px;border:1px solid #7a7a7a"></div>
<svg class="a" style="left:1449px;top:589px;" width="25" height="25" viewBox="0 0 25 25"><circle cx="12.5" cy="12.5" r="10.5" fill="none" stroke="#848484" stroke-width="2.6"/><path d="M5 5 L20 20" stroke="#848484" stroke-width="2.6"/></svg>
<div class="a" style="left:1493px;top:571px;width:73px;height:22px;border:1px solid #7c7c7c;border-radius:3px"></div>
<div class="t " style="left:1505px;top:575px;font-size:12.5px;color:#f0f0f0;font-weight:bold">制作蒙版</div>
<div class="a" style="left:1495px;top:598px;width:12px;height:12px;border:1px solid #6c6c6c;border-radius:2px"></div>
<div class="t " style="left:1512px;top:599px;font-size:12px;color:#6c6c6c;letter-spacing:0.5px">剪切</div>
<div class="a" style="left:1495px;top:618px;width:12px;height:12px;border:1px solid #6c6c6c;border-radius:2px"></div>
<div class="t " style="left:1512px;top:619px;font-size:12px;color:#6c6c6c;">反相蒙版</div>
<div class="a" style="left:1349px;top:637px;width:245px;height:3px;background:#3c3c3c;"></div>
<div class="a" style="left:1349px;top:640px;width:245px;height:28px;background:#424242;"></div>
<div class="a" style="left:1349px;top:640px;width:48px;height:28px;background:#535353;"></div>
<div class="t " style="left:1365px;top:648px;font-size:12.5px;color:#f2f2f2;">变换</div>
<svg class="a" style="left:1354px;top:650px;" width="6" height="10" viewBox="0 0 6 10"><path d="M0.8 3.6 L3 1 L5.2 3.6 M0.8 6.4 L3 9 L5.2 6.4" fill="none" stroke="#cfcfcf" stroke-width="1.1"/></svg>
<div class="a" style="left:1578px;top:650.0px;width:11px;height:1.1px;background:#cfcfcf;"></div>
<div class="a" style="left:1578px;top:652.4px;width:11px;height:1.1px;background:#cfcfcf;"></div>
<div class="a" style="left:1578px;top:654.8px;width:11px;height:1.1px;background:#cfcfcf;"></div>
<div class="a" style="left:1578px;top:657.2px;width:11px;height:1.1px;background:#cfcfcf;"></div>
<svg class="a" style="left:1354px;top:687px;" width="20" height="20" viewBox="0 0 20 20"><rect x="0.6" y="0.6" width="4" height="4" fill="none" stroke="#cfcfcf" stroke-width="1"/><rect x="7.6" y="0.6" width="4" height="4" fill="none" stroke="#cfcfcf" stroke-width="1"/><rect x="14.6" y="0.6" width="4" height="4" fill="none" stroke="#cfcfcf" stroke-width="1"/><rect x="0.6" y="7.6" width="4" height="4" fill="none" stroke="#cfcfcf" stroke-width="1"/><rect x="7.6" y="7.6" width="4" height="4" fill="#e8e8e8" stroke="#cfcfcf" stroke-width="1"/><rect x="14.6" y="7.6" width="4" height="4" fill="none" stroke="#cfcfcf" stroke-width="1"/><rect x="0.6" y="14.6" width="4" height="4" fill="none" stroke="#cfcfcf" stroke-width="1"/><rect x="7.6" y="14.6" width="4" height="4" fill="none" stroke="#cfcfcf" stroke-width="1"/><rect x="14.6" y="14.6" width="4" height="4" fill="none" stroke="#cfcfcf" stroke-width="1"/><path d="M5 2.6 H7.6 M12 2.6 H14.6 M5 9.6 H7.6 M12 9.6 H14.6 M5 16.6 H7.6 M12 16.6 H14.6 M2.6 5 V7.6 M2.6 12 V14.6 M9.6 5 V7.6 M9.6 12 V14.6 M16.6 5 V7.6 M16.6 12 V14.6" stroke="#cfcfcf" stroke-width="0.9"/></svg>
<div class="t " style="left:1385px;top:678px;font-size:12px;color:#bdbdbd;font-family:'Liberation Serif',serif">X:</div>
<div class="a" style="left:1401px;top:674px;width:56px;height:20px;background:#454545;border:1px solid #5f5f5f;border-radius:2px;overflow:hidden"><div class="t num" style="left:3px;top:2.5px;font-size:12.5px;letter-spacing:0.35px;color:#f0f0f0">-64.611 p</div></div>
<div class="t " style="left:1464px;top:678px;font-size:11.5px;color:#bdbdbd;">宽 :</div>
<div class="a" style="left:1488px;top:674px;width:57px;height:20px;background:#454545;border:1px solid #5f5f5f;border-radius:2px;overflow:hidden"><div class="t num" style="left:3px;top:2.5px;font-size:12.5px;letter-spacing:0.35px;color:#f0f0f0">710.526 p</div></div>
<div class="t " style="left:1385px;top:704px;font-size:12px;color:#bdbdbd;font-family:'Liberation Serif',serif">Y:</div>
<div class="a" style="left:1401px;top:700px;width:56px;height:20px;background:#454545;border:1px solid #5f5f5f;border-radius:2px;overflow:hidden"><div class="t num" style="left:3px;top:2.5px;font-size:12.5px;letter-spacing:0.35px;color:#f0f0f0">259.509 p</div></div>
<div class="t " style="left:1464px;top:704px;font-size:11.5px;color:#bdbdbd;">高 :</div>
<div class="a" style="left:1488px;top:700px;width:57px;height:20px;background:#454545;border:1px solid #5f5f5f;border-radius:2px;overflow:hidden"><div class="t num" style="left:3px;top:2.5px;font-size:12.5px;letter-spacing:0.35px;color:#f0f0f0">72.513 px</div></div>
<svg class="a" style="left:1553px;top:686px;" width="16" height="20" viewBox="0 0 16 20"><path d="M5 7 V5 A3 3 0 0 1 11 5 V8 M11 13 V15 A3 3 0 0 1 5 15 V12" fill="none" stroke="#bdbdbd" stroke-width="1.8"/><path d="M1.5 1.5 L14.5 18.5" stroke="#bdbdbd" stroke-width="1.6"/></svg>
<svg class="a" style="left:1382px;top:729px;" width="12" height="11" viewBox="0 0 12 11"><path d="M1 10 H11 M1 10 L8.5 1.5 M6 10 A5 5 0 0 0 4.5 6.2" fill="none" stroke="#bdbdbd" stroke-width="1.3"/></svg>
<div class="t " style="left:1395px;top:730px;font-size:12px;color:#bdbdbd;">:</div>
<div class="a" style="left:1400px;top:726px;width:56px;height:20px;background:#454545;border:1px solid #5f5f5f;border-radius:2px;overflow:hidden"><div class="t num" style="left:3px;top:2.5px;font-size:12.5px;letter-spacing:0.35px;color:#f0f0f0">0°</div></div>
<div class="a" style="left:1438px;top:727px;width:1px;height:18px;background:#5f5f5f;"></div>
<svg class="a" style="left:1443px;top:733px" width="8" height="5" viewBox="0 0 8 5"><path d="M0.8 0.8 L4.0 4.2 L7.2 0.8" fill="none" stroke="#d0d0d0" stroke-width="1.6"/></svg>
<svg class="a" style="left:1464px;top:730px;" width="13" height="10" viewBox="0 0 13 10"><path d="M4 0.5 H12.5 L8.5 9.5 H0 Z" fill="#bdbdbd"/></svg>
<div class="t " style="left:1477px;top:730px;font-size:12px;color:#bdbdbd;">:</div>
<div class="a" style="left:1481px;top:726px;width:56px;height:20px;background:#454545;border:1px solid #5f5f5f;border-radius:2px;overflow:hidden"><div class="t num" style="left:3px;top:2.5px;font-size:12.5px;letter-spacing:0.35px;color:#f0f0f0">0°</div></div>
<div class="a" style="left:1519px;top:727px;width:1px;height:18px;background:#5f5f5f;"></div>
<svg class="a" style="left:1524px;top:733px" width="8" height="5" viewBox="0 0 8 5"><path d="M0.8 0.8 L4.0 4.2 L7.2 0.8" fill="none" stroke="#d0d0d0" stroke-width="1.6"/></svg>
<div class="a" style="left:1349px;top:749px;width:245px;height:3px;background:#3c3c3c;"></div>
<div class="a" style="left:1349px;top:752px;width:245px;height:28px;background:#424242;"></div>
<div class="a" style="left:1349px;top:752px;width:48px;height:28px;background:#535353;"></div>
<div class="t " style="left:1365px;top:760px;font-size:12.5px;color:#f2f2f2;">字符</div>
<svg class="a" style="left:1354px;top:762px;" width="6" height="10" viewBox="0 0 6 10"><path d="M0.8 3.6 L3 1 L5.2 3.6 M0.8 6.4 L3 9 L5.2 6.4" fill="none" stroke="#cfcfcf" stroke-width="1.1"/></svg>
<div class="t " style="left:1407px;top:760px;font-size:12.5px;color:#a4a4a4;">段落</div>
<div class="a" style="left:1439px;top:752px;width:1px;height:28px;background:#3a3a3a;"></div>
<div class="t " style="left:1450px;top:760px;font-size:12.5px;color:#a4a4a4;">OpenType</div>
<div class="a" style="left:1517px;top:752px;width:1px;height:28px;background:#3a3a3a;"></div>
<div class="a" style="left:1578px;top:762.0px;width:11px;height:1.1px;background:#cfcfcf;"></div>
<div class="a" style="left:1578px;top:764.4px;width:11px;height:1.1px;background:#cfcfcf;"></div>
<div class="a" style="left:1578px;top:766.8px;width:11px;height:1.1px;background:#cfcfcf;"></div>
<div class="a" style="left:1578px;top:769.2px;width:11px;height:1.1px;background:#cfcfcf;"></div>
<div class="a" style="left:1354px;top:787px;width:115px;height:22px;border:1px solid #7c7c7c;border-radius:3px"></div>
<svg class="a" style="left:1363px;top:790px;" width="16" height="16" viewBox="0 0 16 16"><rect x="2" y="2" width="12" height="12" fill="none" stroke="#cfcfcf" stroke-width="1"/><rect x="0" y="0" width="3.4" height="3.4" fill="#cfcfcf"/><rect x="12.6" y="0" width="3.4" height="3.4" fill="#cfcfcf"/><rect x="0" y="12.6" width="3.4" height="3.4" fill="#cfcfcf"/><rect x="12.6" y="12.6" width="3.4" height="3.4" fill="#cfcfcf"/><text x="8" y="12.5" font-size="11" font-weight="bold" text-anchor="middle" fill="#e4e4e4" font-family="Liberation Serif,serif">T</text></svg>
<div class="t " style="left:1386px;top:792px;font-size:12px;color:#f0f0f0;font-weight:bold">修饰文字工具</div>
<div class="a" style="left:1354px;top:815px;width:220px;height:19px;background:#454545;border:1px solid #5f5f5f;border-radius:3px"></div>
<svg class="a" style="left:1359px;top:818px;" width="16" height="14" viewBox="0 0 16 14"><circle cx="7.5" cy="5.5" r="4" fill="none" stroke="#c8c8c8" stroke-width="1.5"/><path d="M4.5 8.5 L1 12.5" stroke="#c8c8c8" stroke-width="1.8"/><path d="M11 10 L15.5 10 L13.2 12.5 Z" fill="#c8c8c8"/></svg>
<div class="t num" style="left:1380px;top:817.5px;font-size:12.5px;color:#f0f0f0;letter-spacing:0.21px;">Impact</div>
<div class="a" style="left:1554px;top:816px;width:1px;height:17px;background:#5f5f5f;"></div>
<svg class="a" style="left:1559px;top:822px" width="8" height="5" viewBox="0 0 8 5"><path d="M0.8 0.8 L4.0 4.2 L7.2 0.8" fill="none" stroke="#d0d0d0" stroke-width="1.6"/></svg>
<div class="a" style="left:1354px;top:840px;width:235px;height:21px;background:#454545;border:1px solid #5f5f5f;border-radius:3px"></div>
<div class="t num" style="left:1361px;top:844.5px;font-size:12.5px;color:#f0f0f0;letter-spacing:0.35px;">Regular</div>
<div class="a" style="left:1570px;top:841px;width:1px;height:19px;background:#5f5f5f;"></div>
<svg class="a" style="left:1575px;top:848px" width="8" height="5" viewBox="0 0 8 5"><path d="M0.8 0.8 L4.0 4.2 L7.2 0.8" fill="none" stroke="#d0d0d0" stroke-width="1.6"/></svg>
<div class="a" style="left:1376px;top:871px;width:78px;height:22px;background:#4a4a4a;border:1px solid #5c5c5c;border-radius:2px"></div>
<svg class="a" style="left:1380px;top:874px;" width="8" height="5" viewBox="0 0 8 5"><path d="M0.8 4.2 L4 0.8 L7.2 4.2" fill="none" stroke="#d0d0d0" stroke-width="1.5"/></svg>
<svg class="a" style="left:1380px;top:884px;" width="8" height="5" viewBox="0 0 8 5"><path d="M0.8 0.8 L4 4.2 L7.2 0.8" fill="none" stroke="#d0d0d0" stroke-width="1.5"/></svg>
<div class="a" style="left:1393px;top:872px;width:44px;height:20px;background:#454545;"></div>
<div class="t num" style="left:1396px;top:874.5px;font-size:12.5px;color:#f0f0f0;letter-spacing:0.64px;">59.14 p</div>
<svg class="a" style="left:1441px;top:880px" width="8" height="5" viewBox="0 0 8 5"><path d="M0.8 0.8 L4.0 4.2 L7.2 0.8" fill="none" stroke="#d0d0d0" stroke-width="1.6"/></svg>
<div class="a" style="left:1509px;top:871px;width:80px;height:22px;background:#4a4a4a;border:1px solid #5c5c5c;border-radius:2px"></div>
<svg class="a" style="left:1513px;top:874px;" width="8" height="5" viewBox="0 0 8 5"><path d="M0.8 4.2 L4 0.8 L7.2 4.2" fill="none" stroke="#d0d0d0" stroke-width="1.5"/></svg>
<svg class="a" style="left:1513px;top:884px;" width="8" height="5" viewBox="0 0 8 5"><path d="M0.8 0.8 L4 4.2 L7.2 0.8" fill="none" stroke="#d0d0d0" stroke-width="1.5"/></svg>
<div class="a" style="left:1526px;top:872px;width:44px;height:20px;background:#454545;"></div>
<div class="t num" style="left:1529px;top:874.5px;font-size:12.5px;color:#f0f0f0;letter-spacing:0.62px;">(70.97</div>
<svg class="a" style="left:1575px;top:880px" width="8" height="5" viewBox="0 0 8 5"><path d="M0.8 0.8 L4.0 4.2 L7.2 0.8" fill="none" stroke="#d0d0d0" stroke-width="1.6"/></svg>
<div class="a" style="left:1376px;top:897px;width:78px;height:22px;background:#4a4a4a;border:1px solid #5c5c5c;border-radius:2px"></div>
<svg class="a" style="left:1380px;top:900px;" width="8" height="5" viewBox="0 0 8 5"><path d="M0.8 4.2 L4 0.8 L7.2 4.2" fill="none" stroke="#d0d0d0" stroke-width="1.5"/></svg>
<svg class="a" style="left:1380px;top:910px;" width="8" height="5" viewBox="0 0 8 5"><path d="M0.8 0.8 L4 4.2 L7.2 0.8" fill="none" stroke="#d0d0d0" stroke-width="1.5"/></svg>
<div class="a" style="left:1393px;top:898px;width:44px;height:20px;background:#454545;"></div>
<div class="t num" style="left:1396px;top:900.5px;font-size:12.5px;color:#f0f0f0;letter-spacing:-0.30px;">100%</div>
<svg class="a" style="left:1441px;top:906px" width="8" height="5" viewBox="0 0 8 5"><path d="M0.8 0.8 L4.0 4.2 L7.2 0.8" fill="none" stroke="#d0d0d0" stroke-width="1.6"/></svg>
<div class="a" style="left:1509px;top:897px;width:80px;height:22px;background:#4a4a4a;border:1px solid #5c5c5c;border-radius:2px"></div>
<svg class="a" style="left:1513px;top:900px;" width="8" height="5" viewBox="0 0 8 5"><path d="M0.8 4.2 L4 0.8 L7.2 4.2" fill="none" stroke="#d0d0d0" stroke-width="1.5"/></svg>
<svg class="a" style="left:1513px;top:910px;" width="8" height="5" viewBox="0 0 8 5"><path d="M0.8 0.8 L4 4.2 L7.2 0.8" fill="none" stroke="#d0d0d0" stroke-width="1.5"/></svg>
<div class="a" style="left:1526px;top:898px;width:44px;height:20px;background:#454545;"></div>
<div class="t num" style="left:1529px;top:900.5px;font-size:12.5px;color:#f0f0f0;letter-spacing:-0.30px;">100%</div>
<svg class="a" style="left:1575px;top:906px" width="8" height="5" viewBox="0 0 8 5"><path d="M0.8 0.8 L4.0 4.2 L7.2 0.8" fill="none" stroke="#d0d0d0" stroke-width="1.6"/></svg>
<div class="a" style="left:1376px;top:923px;width:78px;height:22px;background:#4a4a4a;border:1px solid #5c5c5c;border-radius:2px"></div>
<svg class="a" style="left:1380px;top:926px;" width="8" height="5" viewBox="0 0 8 5"><path d="M0.8 4.2 L4 0.8 L7.2 4.2" fill="none" stroke="#d0d0d0" stroke-width="1.5"/></svg>
<svg class="a" style="left:1380px;top:936px;" width="8" height="5" viewBox="0 0 8 5"><path d="M0.8 0.8 L4 4.2 L7.2 0.8" fill="none" stroke="#d0d0d0" stroke-width="1.5"/></svg>
<div class="a" style="left:1393px;top:924px;width:44px;height:20px;background:#454545;"></div>
<div class="t num" style="left:1396px;top:926.5px;font-size:12.5px;color:#f0f0f0;letter-spacing:0.00px;">自动</div>
<svg class="a" style="left:1441px;top:932px" width="8" height="5" viewBox="0 0 8 5"><path d="M0.8 0.8 L4.0 4.2 L7.2 0.8" fill="none" stroke="#d0d0d0" stroke-width="1.6"/></svg>
<div class="a" style="left:1509px;top:923px;width:80px;height:22px;background:#4a4a4a;border:1px solid #5c5c5c;border-radius:2px"></div>
<svg class="a" style="left:1513px;top:926px;" width="8" height="5" viewBox="0 0 8 5"><path d="M0.8 4.2 L4 0.8 L7.2 4.2" fill="none" stroke="#d0d0d0" stroke-width="1.5"/></svg>
<svg class="a" style="left:1513px;top:936px;" width="8" height="5" viewBox="0 0 8 5"><path d="M0.8 0.8 L4 4.2 L7.2 0.8" fill="none" stroke="#d0d0d0" stroke-width="1.5"/></svg>
<div class="a" style="left:1526px;top:924px;width:44px;height:20px;background:#454545;"></div>
<div class="t num" style="left:1529px;top:926.5px;font-size:12.5px;color:#f0f0f0;letter-spacing:-0.25px;">0</div>
<svg class="a" style="left:1575px;top:932px" width="8" height="5" viewBox="0 0 8 5"><path d="M0.8 0.8 L4.0 4.2 L7.2 0.8" fill="none" stroke="#d0d0d0" stroke-width="1.6"/></svg>
<svg class="a" style="left:1354px;top:873px;" width="18" height="18" viewBox="0 0 18 18"><text x="0" y="15" font-size="13" font-weight="bold" fill="#c8c8c8" font-family="Liberation Serif,serif">T</text><text x="6" y="15" font-size="17" font-weight="bold" fill="#c8c8c8" font-family="Liberation Serif,serif">T</text></svg>
<svg class="a" style="left:1353px;top:898px;" width="20" height="20" viewBox="0 0 20 20"><path d="M3 2 V18 M0.8 4.5 L3 1.5 L5.2 4.5 M0.8 15.5 L3 18.5 L5.2 15.5" fill="none" stroke="#c8c8c8" stroke-width="1.2"/><text x="13" y="17.5" font-size="20" font-weight="bold" text-anchor="middle" fill="#c8c8c8" font-family="Liberation Serif,serif">T</text></svg>
<svg class="a" style="left:1354px;top:925px;" width="20" height="20" viewBox="0 0 20 20"><text x="0" y="13" font-size="13" fill="#c8c8c8" font-family="Liberation Sans,sans-serif" letter-spacing="-1.5">VA</text><path d="M7.5 2 L5 14" stroke="#c8c8c8" stroke-width="1"/><path d="M17 17 H4 M7 14.5 L4 17 L7 19.5" fill="none" stroke="#c8c8c8" stroke-width="1.2"/></svg>
<svg class="a" style="left:1488px;top:873px;" width="18" height="18" viewBox="0 0 18 18"><path d="M3 8 L3 2 M1 4 L3 1.5 L5 4" fill="none" stroke="#c8c8c8" stroke-width="1"/><text x="12" y="12" font-size="13" font-weight="bold" text-anchor="middle" fill="#c8c8c8" font-family="Liberation Serif,serif">A</text></svg>
<svg class="a" style="left:1487px;top:899px;" width="20" height="20" viewBox="0 0 20 20"><text x="10" y="13" font-size="16" font-weight="bold" text-anchor="middle" fill="#c8c8c8" font-family="Liberation Serif,serif">T</text><path d="M2 17 H18 M4.5 14.8 L2 17 L4.5 19.2 M15.5 14.8 L18 17 L15.5 19.2" fill="none" stroke="#c8c8c8" stroke-width="1.1"/></svg>
<svg class="a" style="left:1487px;top:925px;" width="20" height="20" viewBox="0 0 20 20"><rect x="1" y="0.5" width="17" height="12" fill="#c8c8c8"/><text x="9.5" y="11" font-size="11.5" text-anchor="middle" fill="#4a4a4a" font-family="Liberation Sans,sans-serif" letter-spacing="-1">VA</text><path d="M2 16.5 H17 M4.5 14.3 L2 16.5 L4.5 18.7 M14.5 14.3 L17 16.5 L14.5 18.7" fill="none" stroke="#c8c8c8" stroke-width="1.1"/></svg>
<svg class="a" style="left:1355px;top:852px;" width="70" height="60" viewBox="0 0 70 60"><ellipse cx="26" cy="22" rx="21" ry="18" fill="#f4f4f4"/><path d="M12 34 L9 45 L21 38 Z" fill="#f4f4f4"/><circle cx="18" cy="17" r="2.6" fill="#4a4a4a"/><circle cx="34" cy="17" r="2.6" fill="#4a4a4a"/><ellipse cx="48" cy="40" rx="18.5" ry="15.5" fill="#f4f4f4" stroke="#5a5a5a" stroke-width="1.5"/><path d="M58 52 L63 59 L52 55 Z" fill="#f4f4f4"/><circle cx="41.5" cy="35" r="2.2" fill="#4a4a4a"/><circle cx="55" cy="35" r="2.2" fill="#4a4a4a"/></svg>
<div class="t " style="left:1430px;top:864px;font-size:38px;color:#fff;font-weight:300;letter-spacing:0px;font-family:'Noto Sans CJK SC',sans-serif">野鹿志</div>
<div class="a" style="left:0px;top:0px;width:1599px;height:1px;background:#111;"></div>
<div class="a" style="left:0px;top:0px;width:1px;height:956px;background:#0a0a0a;"></div>
<div class="a" style="left:1px;top:35px;width:3px;height:921px;background:#4a4a4a;"></div>
<div class="a" style="left:1594px;top:35px;width:5px;height:921px;background:#505050;"></div>
<div class="a" style="left:1593px;top:69px;width:1px;height:887px;background:#3c3c3c;"></div>
<div class="a" style="left:1598px;top:0px;width:1px;height:956px;background:#222;"></div>
<div class="a" style="left:4px;top:951px;width:1590px;height:1px;background:#3a3a3a;"></div>
<div class="a" style="left:1px;top:952px;width:1598px;height:3px;background:#505050;"></div>
<div class="a" style="left:0px;top:955px;width:1599px;height:1px;background:#111;"></div>
</div></body></html>
